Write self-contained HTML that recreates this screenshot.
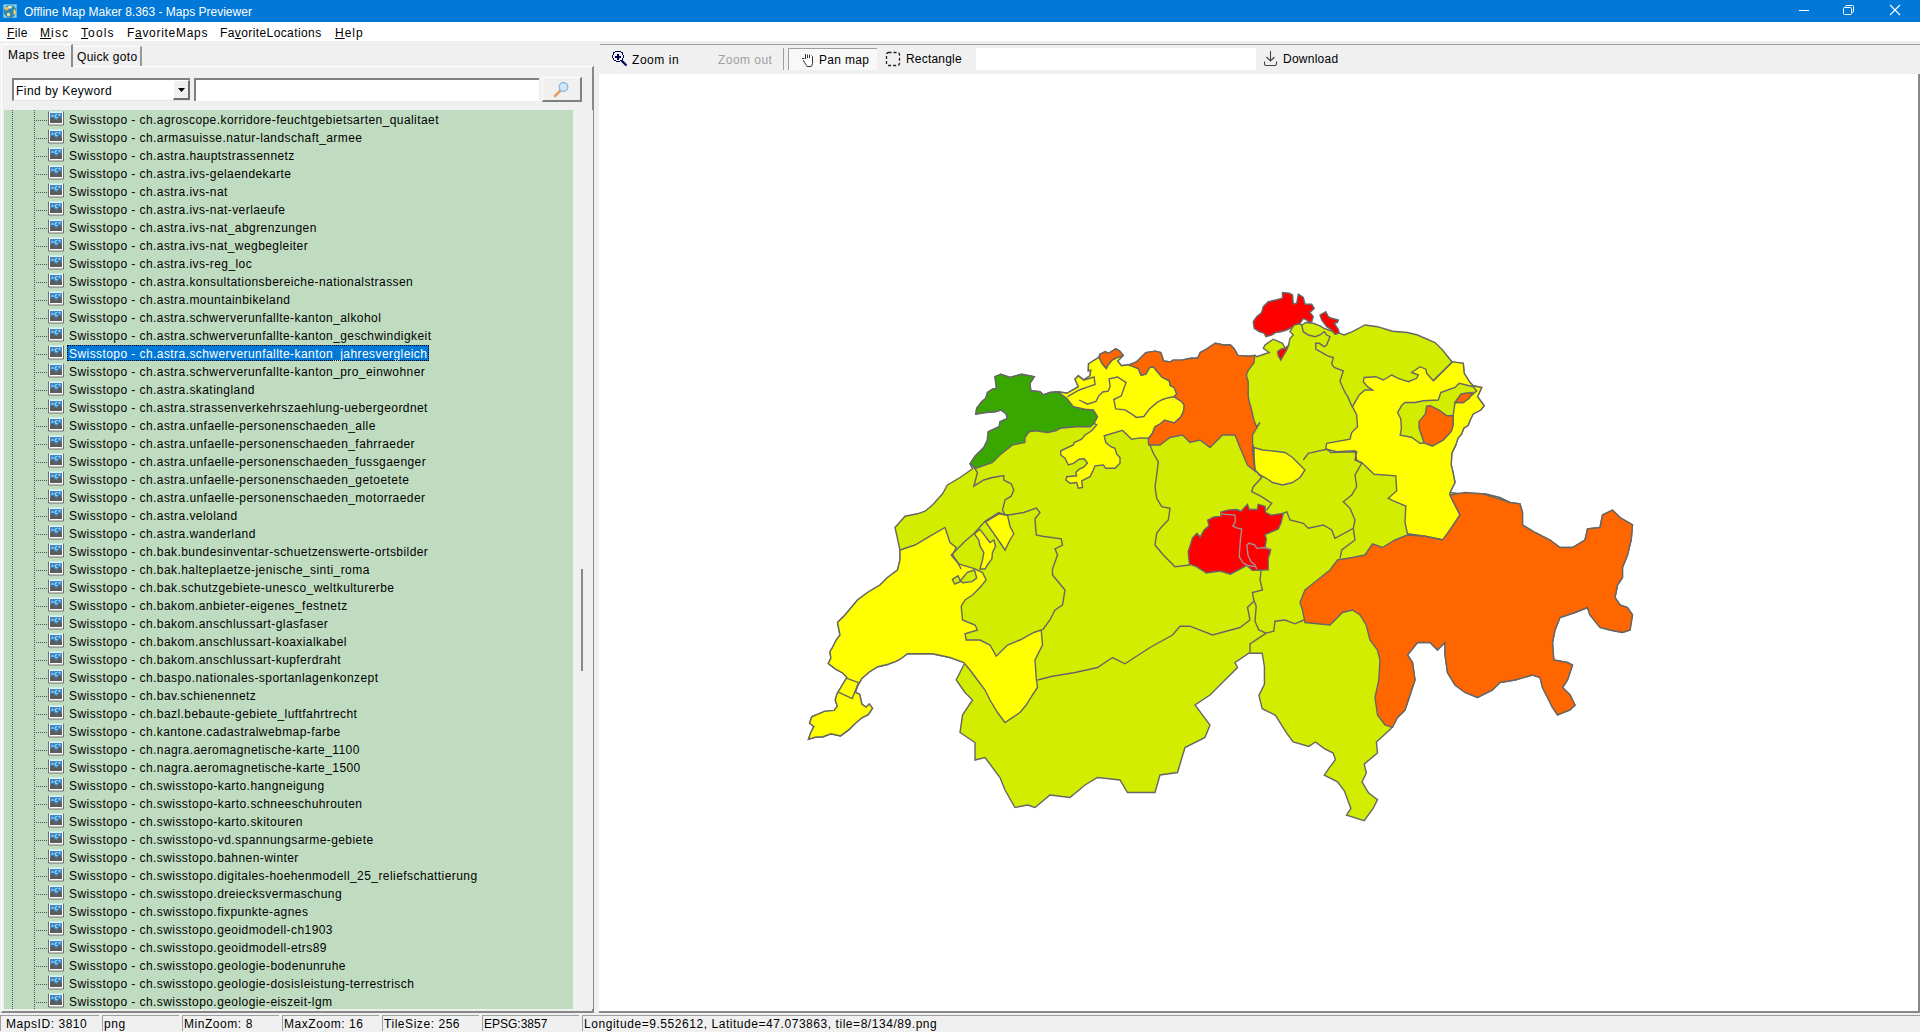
<!DOCTYPE html>
<html><head><meta charset="utf-8"><style>
*{margin:0;padding:0;box-sizing:border-box}
body{width:1920px;height:1032px;overflow:hidden;background:#f0f0f0;position:relative;font-family:'Liberation Sans',sans-serif;font-size:12px;color:#000}
.abs{position:absolute}
.title{position:absolute;left:0;top:0;width:1920px;height:22px;background:#0078d7}
.menu{position:absolute;left:0;top:22px;width:1920px;height:19px;background:#fff}
.menu>span{position:absolute;top:4px;line-height:15px;letter-spacing:0.4px}
.u{text-decoration:underline;text-underline-offset:1px}
.row{position:absolute;left:0;width:573px;height:18px;white-space:pre;letter-spacing:0.43px;}
.hdot{position:absolute;left:36px;top:9px;width:12px;height:1px;background-image:linear-gradient(to right,#555 1px,transparent 1px);background-size:2px 1px}
.sb{position:absolute;top:1015px;height:16px;border-top:1px solid #a0a0a0;border-left:1px solid #a0a0a0;line-height:16px;padding-left:1px;white-space:pre;letter-spacing:0.55px}
</style></head><body>
<div class="title">
 <svg class="abs" style="left:3px;top:4px" width="14" height="14" viewBox="0 0 14 14"><rect width="14" height="14" fill="#86d2ee"/><circle cx="7" cy="7.2" r="6.3" fill="#2f86a8"/><ellipse cx="3.6" cy="4.6" rx="2.2" ry="1.8" fill="#f0b868"/><ellipse cx="7" cy="3" rx="2.2" ry="1.6" fill="#d8eedd"/><path d="M11 5 Q13.5 6.5 12.8 9.5 Q11.5 12 10.5 10 Q10 7 11 5Z" fill="#f2d26a"/><ellipse cx="5.5" cy="10.5" rx="1.6" ry="2" fill="#e2e29a"/><path d="M0 0 H14 V14 H0Z" fill="none" stroke="#1a64c8" stroke-width="0.6"/></svg>
 <span class="abs" style="left:24px;top:5px;color:#fff;line-height:14px;font-size:12px">Offline Map Maker 8.363 - Maps Previewer</span>
 <div class="abs" style="left:1799px;top:10px;width:10px;height:1px;background:#fff"></div>
 <svg class="abs" style="left:1843px;top:5px" width="12" height="11" viewBox="0 0 12 11"><rect x="0.5" y="2.5" width="8" height="7" rx="1" fill="none" stroke="#fff"/><path d="M2.5 2.5 V1.5 Q2.5 0.5 3.5 0.5 H9.5 Q10.5 0.5 10.5 1.5 V6.5 Q10.5 7.5 9.5 7.5 H8.5" fill="none" stroke="#fff"/></svg>
 <svg class="abs" style="left:1889px;top:4px" width="12" height="12" viewBox="0 0 12 12"><path d="M1 1 L11 11 M11 1 L1 11" stroke="#fff" stroke-width="1.1"/></svg>
</div>
<div class="menu">
 <span style="left:7px"><span class="u">F</span>ile</span>
 <span style="left:40px;letter-spacing:1.1px"><span class="u">M</span>isc</span>
 <span style="left:81px;letter-spacing:1.1px"><span class="u">T</span>ools</span>
 <span style="left:127px;letter-spacing:0.7px">F<span class="u">a</span>voriteMaps</span>
 <span style="left:220px">Fa<span class="u">v</span>oriteLocations</span>
 <span style="left:335px;letter-spacing:1px"><span class="u">H</span>elp</span>
</div>
<!-- left panel -->
<div class="abs" style="left:1px;top:44px;width:72px;height:23px;background:#f0f0f0;border-top:1px solid #fff;border-left:1px solid #fff;border-right:2px solid #8a8a8a"></div>
<span class="abs" style="left:8px;top:48px;line-height:15px;letter-spacing:0.45px">Maps tree</span>
<div class="abs" style="left:73px;top:46px;width:69px;height:20px;border-top:1px solid #fff;border-right:2px solid #999"></div>
<span class="abs" style="left:77px;top:50px;line-height:15px;letter-spacing:0.3px">Quick goto</span>
<div class="abs" style="left:1px;top:66px;width:593px;height:947px;border-left:1px solid #fff;border-right:2px solid #888;border-bottom:2px solid #888"></div><div class="abs" style="left:73px;top:66px;width:520px;height:1px;background:#fff"></div>
<!-- combobox -->
<div class="abs" style="left:12px;top:78px;width:178px;height:23px;background:#fff;border-top:2px solid #808080;border-left:2px solid #808080;border-bottom:1px solid #e3e3e3"></div>
<span class="abs" style="left:16px;top:84px;line-height:15px;letter-spacing:0.45px">Find by Keyword</span>
<div class="abs" style="left:173px;top:80px;width:17px;height:20px;background:#f0f0f0;border-right:2px solid #6e6e6e;border-bottom:2px solid #6e6e6e;border-top:1px solid #fff;border-left:1px solid #fff"></div>
<svg class="abs" style="left:178px;top:88px" width="7" height="4"><path d="M0 0 H7 L3.5 4 Z" fill="#000"/></svg>
<div class="abs" style="left:194px;top:78px;width:345px;height:23px;background:#fff;border-top:2px solid #808080;border-left:2px solid #808080"></div>
<div class="abs" style="left:542px;top:77px;width:40px;height:25px;background:#f0f0f0;border-top:1px solid #fff;border-left:1px solid #fff;border-right:2px solid #808080;border-bottom:2px solid #808080"></div>
<svg class="abs" style="left:553px;top:81px" width="17" height="17" viewBox="0 0 17 17"><path d="M2 15 L7 10" stroke="#e0a060" stroke-width="2.6" stroke-linecap="round"/><circle cx="10.5" cy="6" r="4.3" fill="#cde8f8" stroke="#8ab0d8" stroke-width="1.2"/></svg>
<!-- tree -->
<div class="abs" style="left:4px;top:110px;width:569px;height:899px;background:#c0dcc0;overflow:hidden">
 <div class="abs" style="left:8px;top:0;width:1px;height:899px;background-image:linear-gradient(#555 1px,transparent 1px);background-size:1px 2px"></div>
 <div class="abs" style="left:30px;top:0;width:1px;height:899px;background-image:linear-gradient(#555 1px,transparent 1px);background-size:1px 2px"></div>
</div>
<div class="abs" style="left:0;top:0;width:573px;height:1009px;overflow:hidden">
<div class="row" style="top:111px"><svg width="16" height="15" viewBox="0 0 16 15" style="position:absolute;left:48px;top:0px"><rect x="0.5" y="0.5" width="15" height="13.5" fill="#fff"/><path d="M0.5 0.5 V14 H15.5 V0.5" fill="none" stroke="#6e6e6e" stroke-width="1"/><path d="M1 1 H15" stroke="#bfe6ee" stroke-width="1"/><rect x="2" y="2" width="12" height="10" fill="#3f88c8"/><path d="M2 12 V8 L4.5 5.8 L8.5 9.5 L11.5 5.8 L14 8 V12 Z" fill="#5c5c5c"/><circle cx="4.5" cy="5" r="1" fill="#9ad4ff"/><path d="M9 3.6 A1.6 1.6 0 1 0 9.4 6.6" stroke="#a8ecff" stroke-width="1" fill="none"/><path d="M11.5 2.6 v2.4 M10.3 3.8 h2.4" stroke="#9ad4ff" stroke-width="0.8"/></svg><div class="hdot"></div><span style="position:absolute;left:69px;top:0px;line-height:18px;">Swisstopo - ch.agroscope.korridore-feuchtgebietsarten_qualitaet</span></div><div class="row" style="top:129px"><svg width="16" height="15" viewBox="0 0 16 15" style="position:absolute;left:48px;top:0px"><rect x="0.5" y="0.5" width="15" height="13.5" fill="#fff"/><path d="M0.5 0.5 V14 H15.5 V0.5" fill="none" stroke="#6e6e6e" stroke-width="1"/><path d="M1 1 H15" stroke="#bfe6ee" stroke-width="1"/><rect x="2" y="2" width="12" height="10" fill="#3f88c8"/><path d="M2 12 V8 L4.5 5.8 L8.5 9.5 L11.5 5.8 L14 8 V12 Z" fill="#5c5c5c"/><circle cx="4.5" cy="5" r="1" fill="#9ad4ff"/><path d="M9 3.6 A1.6 1.6 0 1 0 9.4 6.6" stroke="#a8ecff" stroke-width="1" fill="none"/><path d="M11.5 2.6 v2.4 M10.3 3.8 h2.4" stroke="#9ad4ff" stroke-width="0.8"/></svg><div class="hdot"></div><span style="position:absolute;left:69px;top:0px;line-height:18px;">Swisstopo - ch.armasuisse.natur-landschaft_armee</span></div><div class="row" style="top:147px"><svg width="16" height="15" viewBox="0 0 16 15" style="position:absolute;left:48px;top:0px"><rect x="0.5" y="0.5" width="15" height="13.5" fill="#fff"/><path d="M0.5 0.5 V14 H15.5 V0.5" fill="none" stroke="#6e6e6e" stroke-width="1"/><path d="M1 1 H15" stroke="#bfe6ee" stroke-width="1"/><rect x="2" y="2" width="12" height="10" fill="#3f88c8"/><path d="M2 12 V8 L4.5 5.8 L8.5 9.5 L11.5 5.8 L14 8 V12 Z" fill="#5c5c5c"/><circle cx="4.5" cy="5" r="1" fill="#9ad4ff"/><path d="M9 3.6 A1.6 1.6 0 1 0 9.4 6.6" stroke="#a8ecff" stroke-width="1" fill="none"/><path d="M11.5 2.6 v2.4 M10.3 3.8 h2.4" stroke="#9ad4ff" stroke-width="0.8"/></svg><div class="hdot"></div><span style="position:absolute;left:69px;top:0px;line-height:18px;">Swisstopo - ch.astra.hauptstrassennetz</span></div><div class="row" style="top:165px"><svg width="16" height="15" viewBox="0 0 16 15" style="position:absolute;left:48px;top:0px"><rect x="0.5" y="0.5" width="15" height="13.5" fill="#fff"/><path d="M0.5 0.5 V14 H15.5 V0.5" fill="none" stroke="#6e6e6e" stroke-width="1"/><path d="M1 1 H15" stroke="#bfe6ee" stroke-width="1"/><rect x="2" y="2" width="12" height="10" fill="#3f88c8"/><path d="M2 12 V8 L4.5 5.8 L8.5 9.5 L11.5 5.8 L14 8 V12 Z" fill="#5c5c5c"/><circle cx="4.5" cy="5" r="1" fill="#9ad4ff"/><path d="M9 3.6 A1.6 1.6 0 1 0 9.4 6.6" stroke="#a8ecff" stroke-width="1" fill="none"/><path d="M11.5 2.6 v2.4 M10.3 3.8 h2.4" stroke="#9ad4ff" stroke-width="0.8"/></svg><div class="hdot"></div><span style="position:absolute;left:69px;top:0px;line-height:18px;">Swisstopo - ch.astra.ivs-gelaendekarte</span></div><div class="row" style="top:183px"><svg width="16" height="15" viewBox="0 0 16 15" style="position:absolute;left:48px;top:0px"><rect x="0.5" y="0.5" width="15" height="13.5" fill="#fff"/><path d="M0.5 0.5 V14 H15.5 V0.5" fill="none" stroke="#6e6e6e" stroke-width="1"/><path d="M1 1 H15" stroke="#bfe6ee" stroke-width="1"/><rect x="2" y="2" width="12" height="10" fill="#3f88c8"/><path d="M2 12 V8 L4.5 5.8 L8.5 9.5 L11.5 5.8 L14 8 V12 Z" fill="#5c5c5c"/><circle cx="4.5" cy="5" r="1" fill="#9ad4ff"/><path d="M9 3.6 A1.6 1.6 0 1 0 9.4 6.6" stroke="#a8ecff" stroke-width="1" fill="none"/><path d="M11.5 2.6 v2.4 M10.3 3.8 h2.4" stroke="#9ad4ff" stroke-width="0.8"/></svg><div class="hdot"></div><span style="position:absolute;left:69px;top:0px;line-height:18px;">Swisstopo - ch.astra.ivs-nat</span></div><div class="row" style="top:201px"><svg width="16" height="15" viewBox="0 0 16 15" style="position:absolute;left:48px;top:0px"><rect x="0.5" y="0.5" width="15" height="13.5" fill="#fff"/><path d="M0.5 0.5 V14 H15.5 V0.5" fill="none" stroke="#6e6e6e" stroke-width="1"/><path d="M1 1 H15" stroke="#bfe6ee" stroke-width="1"/><rect x="2" y="2" width="12" height="10" fill="#3f88c8"/><path d="M2 12 V8 L4.5 5.8 L8.5 9.5 L11.5 5.8 L14 8 V12 Z" fill="#5c5c5c"/><circle cx="4.5" cy="5" r="1" fill="#9ad4ff"/><path d="M9 3.6 A1.6 1.6 0 1 0 9.4 6.6" stroke="#a8ecff" stroke-width="1" fill="none"/><path d="M11.5 2.6 v2.4 M10.3 3.8 h2.4" stroke="#9ad4ff" stroke-width="0.8"/></svg><div class="hdot"></div><span style="position:absolute;left:69px;top:0px;line-height:18px;">Swisstopo - ch.astra.ivs-nat-verlaeufe</span></div><div class="row" style="top:219px"><svg width="16" height="15" viewBox="0 0 16 15" style="position:absolute;left:48px;top:0px"><rect x="0.5" y="0.5" width="15" height="13.5" fill="#fff"/><path d="M0.5 0.5 V14 H15.5 V0.5" fill="none" stroke="#6e6e6e" stroke-width="1"/><path d="M1 1 H15" stroke="#bfe6ee" stroke-width="1"/><rect x="2" y="2" width="12" height="10" fill="#3f88c8"/><path d="M2 12 V8 L4.5 5.8 L8.5 9.5 L11.5 5.8 L14 8 V12 Z" fill="#5c5c5c"/><circle cx="4.5" cy="5" r="1" fill="#9ad4ff"/><path d="M9 3.6 A1.6 1.6 0 1 0 9.4 6.6" stroke="#a8ecff" stroke-width="1" fill="none"/><path d="M11.5 2.6 v2.4 M10.3 3.8 h2.4" stroke="#9ad4ff" stroke-width="0.8"/></svg><div class="hdot"></div><span style="position:absolute;left:69px;top:0px;line-height:18px;">Swisstopo - ch.astra.ivs-nat_abgrenzungen</span></div><div class="row" style="top:237px"><svg width="16" height="15" viewBox="0 0 16 15" style="position:absolute;left:48px;top:0px"><rect x="0.5" y="0.5" width="15" height="13.5" fill="#fff"/><path d="M0.5 0.5 V14 H15.5 V0.5" fill="none" stroke="#6e6e6e" stroke-width="1"/><path d="M1 1 H15" stroke="#bfe6ee" stroke-width="1"/><rect x="2" y="2" width="12" height="10" fill="#3f88c8"/><path d="M2 12 V8 L4.5 5.8 L8.5 9.5 L11.5 5.8 L14 8 V12 Z" fill="#5c5c5c"/><circle cx="4.5" cy="5" r="1" fill="#9ad4ff"/><path d="M9 3.6 A1.6 1.6 0 1 0 9.4 6.6" stroke="#a8ecff" stroke-width="1" fill="none"/><path d="M11.5 2.6 v2.4 M10.3 3.8 h2.4" stroke="#9ad4ff" stroke-width="0.8"/></svg><div class="hdot"></div><span style="position:absolute;left:69px;top:0px;line-height:18px;">Swisstopo - ch.astra.ivs-nat_wegbegleiter</span></div><div class="row" style="top:255px"><svg width="16" height="15" viewBox="0 0 16 15" style="position:absolute;left:48px;top:0px"><rect x="0.5" y="0.5" width="15" height="13.5" fill="#fff"/><path d="M0.5 0.5 V14 H15.5 V0.5" fill="none" stroke="#6e6e6e" stroke-width="1"/><path d="M1 1 H15" stroke="#bfe6ee" stroke-width="1"/><rect x="2" y="2" width="12" height="10" fill="#3f88c8"/><path d="M2 12 V8 L4.5 5.8 L8.5 9.5 L11.5 5.8 L14 8 V12 Z" fill="#5c5c5c"/><circle cx="4.5" cy="5" r="1" fill="#9ad4ff"/><path d="M9 3.6 A1.6 1.6 0 1 0 9.4 6.6" stroke="#a8ecff" stroke-width="1" fill="none"/><path d="M11.5 2.6 v2.4 M10.3 3.8 h2.4" stroke="#9ad4ff" stroke-width="0.8"/></svg><div class="hdot"></div><span style="position:absolute;left:69px;top:0px;line-height:18px;">Swisstopo - ch.astra.ivs-reg_loc</span></div><div class="row" style="top:273px"><svg width="16" height="15" viewBox="0 0 16 15" style="position:absolute;left:48px;top:0px"><rect x="0.5" y="0.5" width="15" height="13.5" fill="#fff"/><path d="M0.5 0.5 V14 H15.5 V0.5" fill="none" stroke="#6e6e6e" stroke-width="1"/><path d="M1 1 H15" stroke="#bfe6ee" stroke-width="1"/><rect x="2" y="2" width="12" height="10" fill="#3f88c8"/><path d="M2 12 V8 L4.5 5.8 L8.5 9.5 L11.5 5.8 L14 8 V12 Z" fill="#5c5c5c"/><circle cx="4.5" cy="5" r="1" fill="#9ad4ff"/><path d="M9 3.6 A1.6 1.6 0 1 0 9.4 6.6" stroke="#a8ecff" stroke-width="1" fill="none"/><path d="M11.5 2.6 v2.4 M10.3 3.8 h2.4" stroke="#9ad4ff" stroke-width="0.8"/></svg><div class="hdot"></div><span style="position:absolute;left:69px;top:0px;line-height:18px;">Swisstopo - ch.astra.konsultationsbereiche-nationalstrassen</span></div><div class="row" style="top:291px"><svg width="16" height="15" viewBox="0 0 16 15" style="position:absolute;left:48px;top:0px"><rect x="0.5" y="0.5" width="15" height="13.5" fill="#fff"/><path d="M0.5 0.5 V14 H15.5 V0.5" fill="none" stroke="#6e6e6e" stroke-width="1"/><path d="M1 1 H15" stroke="#bfe6ee" stroke-width="1"/><rect x="2" y="2" width="12" height="10" fill="#3f88c8"/><path d="M2 12 V8 L4.5 5.8 L8.5 9.5 L11.5 5.8 L14 8 V12 Z" fill="#5c5c5c"/><circle cx="4.5" cy="5" r="1" fill="#9ad4ff"/><path d="M9 3.6 A1.6 1.6 0 1 0 9.4 6.6" stroke="#a8ecff" stroke-width="1" fill="none"/><path d="M11.5 2.6 v2.4 M10.3 3.8 h2.4" stroke="#9ad4ff" stroke-width="0.8"/></svg><div class="hdot"></div><span style="position:absolute;left:69px;top:0px;line-height:18px;">Swisstopo - ch.astra.mountainbikeland</span></div><div class="row" style="top:309px"><svg width="16" height="15" viewBox="0 0 16 15" style="position:absolute;left:48px;top:0px"><rect x="0.5" y="0.5" width="15" height="13.5" fill="#fff"/><path d="M0.5 0.5 V14 H15.5 V0.5" fill="none" stroke="#6e6e6e" stroke-width="1"/><path d="M1 1 H15" stroke="#bfe6ee" stroke-width="1"/><rect x="2" y="2" width="12" height="10" fill="#3f88c8"/><path d="M2 12 V8 L4.5 5.8 L8.5 9.5 L11.5 5.8 L14 8 V12 Z" fill="#5c5c5c"/><circle cx="4.5" cy="5" r="1" fill="#9ad4ff"/><path d="M9 3.6 A1.6 1.6 0 1 0 9.4 6.6" stroke="#a8ecff" stroke-width="1" fill="none"/><path d="M11.5 2.6 v2.4 M10.3 3.8 h2.4" stroke="#9ad4ff" stroke-width="0.8"/></svg><div class="hdot"></div><span style="position:absolute;left:69px;top:0px;line-height:18px;">Swisstopo - ch.astra.schwerverunfallte-kanton_alkohol</span></div><div class="row" style="top:327px"><svg width="16" height="15" viewBox="0 0 16 15" style="position:absolute;left:48px;top:0px"><rect x="0.5" y="0.5" width="15" height="13.5" fill="#fff"/><path d="M0.5 0.5 V14 H15.5 V0.5" fill="none" stroke="#6e6e6e" stroke-width="1"/><path d="M1 1 H15" stroke="#bfe6ee" stroke-width="1"/><rect x="2" y="2" width="12" height="10" fill="#3f88c8"/><path d="M2 12 V8 L4.5 5.8 L8.5 9.5 L11.5 5.8 L14 8 V12 Z" fill="#5c5c5c"/><circle cx="4.5" cy="5" r="1" fill="#9ad4ff"/><path d="M9 3.6 A1.6 1.6 0 1 0 9.4 6.6" stroke="#a8ecff" stroke-width="1" fill="none"/><path d="M11.5 2.6 v2.4 M10.3 3.8 h2.4" stroke="#9ad4ff" stroke-width="0.8"/></svg><div class="hdot"></div><span style="position:absolute;left:69px;top:0px;line-height:18px;">Swisstopo - ch.astra.schwerverunfallte-kanton_geschwindigkeit</span></div><div class="row" style="top:345px"><svg width="16" height="15" viewBox="0 0 16 15" style="position:absolute;left:48px;top:0px"><rect x="0.5" y="0.5" width="15" height="13.5" fill="#fff"/><path d="M0.5 0.5 V14 H15.5 V0.5" fill="none" stroke="#6e6e6e" stroke-width="1"/><path d="M1 1 H15" stroke="#bfe6ee" stroke-width="1"/><rect x="2" y="2" width="12" height="10" fill="#3f88c8"/><path d="M2 12 V8 L4.5 5.8 L8.5 9.5 L11.5 5.8 L14 8 V12 Z" fill="#5c5c5c"/><circle cx="4.5" cy="5" r="1" fill="#9ad4ff"/><path d="M9 3.6 A1.6 1.6 0 1 0 9.4 6.6" stroke="#a8ecff" stroke-width="1" fill="none"/><path d="M11.5 2.6 v2.4 M10.3 3.8 h2.4" stroke="#9ad4ff" stroke-width="0.8"/></svg><div class="hdot"></div><span style="position:absolute;left:67px;top:0px;height:16px;padding:0 2px;background:#0078d7;color:#fff;outline:1px dotted #000;outline-offset:-1px;line-height:18px;">Swisstopo - ch.astra.schwerverunfallte-kanton_jahresvergleich</span></div><div class="row" style="top:363px"><svg width="16" height="15" viewBox="0 0 16 15" style="position:absolute;left:48px;top:0px"><rect x="0.5" y="0.5" width="15" height="13.5" fill="#fff"/><path d="M0.5 0.5 V14 H15.5 V0.5" fill="none" stroke="#6e6e6e" stroke-width="1"/><path d="M1 1 H15" stroke="#bfe6ee" stroke-width="1"/><rect x="2" y="2" width="12" height="10" fill="#3f88c8"/><path d="M2 12 V8 L4.5 5.8 L8.5 9.5 L11.5 5.8 L14 8 V12 Z" fill="#5c5c5c"/><circle cx="4.5" cy="5" r="1" fill="#9ad4ff"/><path d="M9 3.6 A1.6 1.6 0 1 0 9.4 6.6" stroke="#a8ecff" stroke-width="1" fill="none"/><path d="M11.5 2.6 v2.4 M10.3 3.8 h2.4" stroke="#9ad4ff" stroke-width="0.8"/></svg><div class="hdot"></div><span style="position:absolute;left:69px;top:0px;line-height:18px;">Swisstopo - ch.astra.schwerverunfallte-kanton_pro_einwohner</span></div><div class="row" style="top:381px"><svg width="16" height="15" viewBox="0 0 16 15" style="position:absolute;left:48px;top:0px"><rect x="0.5" y="0.5" width="15" height="13.5" fill="#fff"/><path d="M0.5 0.5 V14 H15.5 V0.5" fill="none" stroke="#6e6e6e" stroke-width="1"/><path d="M1 1 H15" stroke="#bfe6ee" stroke-width="1"/><rect x="2" y="2" width="12" height="10" fill="#3f88c8"/><path d="M2 12 V8 L4.5 5.8 L8.5 9.5 L11.5 5.8 L14 8 V12 Z" fill="#5c5c5c"/><circle cx="4.5" cy="5" r="1" fill="#9ad4ff"/><path d="M9 3.6 A1.6 1.6 0 1 0 9.4 6.6" stroke="#a8ecff" stroke-width="1" fill="none"/><path d="M11.5 2.6 v2.4 M10.3 3.8 h2.4" stroke="#9ad4ff" stroke-width="0.8"/></svg><div class="hdot"></div><span style="position:absolute;left:69px;top:0px;line-height:18px;">Swisstopo - ch.astra.skatingland</span></div><div class="row" style="top:399px"><svg width="16" height="15" viewBox="0 0 16 15" style="position:absolute;left:48px;top:0px"><rect x="0.5" y="0.5" width="15" height="13.5" fill="#fff"/><path d="M0.5 0.5 V14 H15.5 V0.5" fill="none" stroke="#6e6e6e" stroke-width="1"/><path d="M1 1 H15" stroke="#bfe6ee" stroke-width="1"/><rect x="2" y="2" width="12" height="10" fill="#3f88c8"/><path d="M2 12 V8 L4.5 5.8 L8.5 9.5 L11.5 5.8 L14 8 V12 Z" fill="#5c5c5c"/><circle cx="4.5" cy="5" r="1" fill="#9ad4ff"/><path d="M9 3.6 A1.6 1.6 0 1 0 9.4 6.6" stroke="#a8ecff" stroke-width="1" fill="none"/><path d="M11.5 2.6 v2.4 M10.3 3.8 h2.4" stroke="#9ad4ff" stroke-width="0.8"/></svg><div class="hdot"></div><span style="position:absolute;left:69px;top:0px;line-height:18px;">Swisstopo - ch.astra.strassenverkehrszaehlung-uebergeordnet</span></div><div class="row" style="top:417px"><svg width="16" height="15" viewBox="0 0 16 15" style="position:absolute;left:48px;top:0px"><rect x="0.5" y="0.5" width="15" height="13.5" fill="#fff"/><path d="M0.5 0.5 V14 H15.5 V0.5" fill="none" stroke="#6e6e6e" stroke-width="1"/><path d="M1 1 H15" stroke="#bfe6ee" stroke-width="1"/><rect x="2" y="2" width="12" height="10" fill="#3f88c8"/><path d="M2 12 V8 L4.5 5.8 L8.5 9.5 L11.5 5.8 L14 8 V12 Z" fill="#5c5c5c"/><circle cx="4.5" cy="5" r="1" fill="#9ad4ff"/><path d="M9 3.6 A1.6 1.6 0 1 0 9.4 6.6" stroke="#a8ecff" stroke-width="1" fill="none"/><path d="M11.5 2.6 v2.4 M10.3 3.8 h2.4" stroke="#9ad4ff" stroke-width="0.8"/></svg><div class="hdot"></div><span style="position:absolute;left:69px;top:0px;line-height:18px;">Swisstopo - ch.astra.unfaelle-personenschaeden_alle</span></div><div class="row" style="top:435px"><svg width="16" height="15" viewBox="0 0 16 15" style="position:absolute;left:48px;top:0px"><rect x="0.5" y="0.5" width="15" height="13.5" fill="#fff"/><path d="M0.5 0.5 V14 H15.5 V0.5" fill="none" stroke="#6e6e6e" stroke-width="1"/><path d="M1 1 H15" stroke="#bfe6ee" stroke-width="1"/><rect x="2" y="2" width="12" height="10" fill="#3f88c8"/><path d="M2 12 V8 L4.5 5.8 L8.5 9.5 L11.5 5.8 L14 8 V12 Z" fill="#5c5c5c"/><circle cx="4.5" cy="5" r="1" fill="#9ad4ff"/><path d="M9 3.6 A1.6 1.6 0 1 0 9.4 6.6" stroke="#a8ecff" stroke-width="1" fill="none"/><path d="M11.5 2.6 v2.4 M10.3 3.8 h2.4" stroke="#9ad4ff" stroke-width="0.8"/></svg><div class="hdot"></div><span style="position:absolute;left:69px;top:0px;line-height:18px;">Swisstopo - ch.astra.unfaelle-personenschaeden_fahrraeder</span></div><div class="row" style="top:453px"><svg width="16" height="15" viewBox="0 0 16 15" style="position:absolute;left:48px;top:0px"><rect x="0.5" y="0.5" width="15" height="13.5" fill="#fff"/><path d="M0.5 0.5 V14 H15.5 V0.5" fill="none" stroke="#6e6e6e" stroke-width="1"/><path d="M1 1 H15" stroke="#bfe6ee" stroke-width="1"/><rect x="2" y="2" width="12" height="10" fill="#3f88c8"/><path d="M2 12 V8 L4.5 5.8 L8.5 9.5 L11.5 5.8 L14 8 V12 Z" fill="#5c5c5c"/><circle cx="4.5" cy="5" r="1" fill="#9ad4ff"/><path d="M9 3.6 A1.6 1.6 0 1 0 9.4 6.6" stroke="#a8ecff" stroke-width="1" fill="none"/><path d="M11.5 2.6 v2.4 M10.3 3.8 h2.4" stroke="#9ad4ff" stroke-width="0.8"/></svg><div class="hdot"></div><span style="position:absolute;left:69px;top:0px;line-height:18px;">Swisstopo - ch.astra.unfaelle-personenschaeden_fussgaenger</span></div><div class="row" style="top:471px"><svg width="16" height="15" viewBox="0 0 16 15" style="position:absolute;left:48px;top:0px"><rect x="0.5" y="0.5" width="15" height="13.5" fill="#fff"/><path d="M0.5 0.5 V14 H15.5 V0.5" fill="none" stroke="#6e6e6e" stroke-width="1"/><path d="M1 1 H15" stroke="#bfe6ee" stroke-width="1"/><rect x="2" y="2" width="12" height="10" fill="#3f88c8"/><path d="M2 12 V8 L4.5 5.8 L8.5 9.5 L11.5 5.8 L14 8 V12 Z" fill="#5c5c5c"/><circle cx="4.5" cy="5" r="1" fill="#9ad4ff"/><path d="M9 3.6 A1.6 1.6 0 1 0 9.4 6.6" stroke="#a8ecff" stroke-width="1" fill="none"/><path d="M11.5 2.6 v2.4 M10.3 3.8 h2.4" stroke="#9ad4ff" stroke-width="0.8"/></svg><div class="hdot"></div><span style="position:absolute;left:69px;top:0px;line-height:18px;">Swisstopo - ch.astra.unfaelle-personenschaeden_getoetete</span></div><div class="row" style="top:489px"><svg width="16" height="15" viewBox="0 0 16 15" style="position:absolute;left:48px;top:0px"><rect x="0.5" y="0.5" width="15" height="13.5" fill="#fff"/><path d="M0.5 0.5 V14 H15.5 V0.5" fill="none" stroke="#6e6e6e" stroke-width="1"/><path d="M1 1 H15" stroke="#bfe6ee" stroke-width="1"/><rect x="2" y="2" width="12" height="10" fill="#3f88c8"/><path d="M2 12 V8 L4.5 5.8 L8.5 9.5 L11.5 5.8 L14 8 V12 Z" fill="#5c5c5c"/><circle cx="4.5" cy="5" r="1" fill="#9ad4ff"/><path d="M9 3.6 A1.6 1.6 0 1 0 9.4 6.6" stroke="#a8ecff" stroke-width="1" fill="none"/><path d="M11.5 2.6 v2.4 M10.3 3.8 h2.4" stroke="#9ad4ff" stroke-width="0.8"/></svg><div class="hdot"></div><span style="position:absolute;left:69px;top:0px;line-height:18px;">Swisstopo - ch.astra.unfaelle-personenschaeden_motorraeder</span></div><div class="row" style="top:507px"><svg width="16" height="15" viewBox="0 0 16 15" style="position:absolute;left:48px;top:0px"><rect x="0.5" y="0.5" width="15" height="13.5" fill="#fff"/><path d="M0.5 0.5 V14 H15.5 V0.5" fill="none" stroke="#6e6e6e" stroke-width="1"/><path d="M1 1 H15" stroke="#bfe6ee" stroke-width="1"/><rect x="2" y="2" width="12" height="10" fill="#3f88c8"/><path d="M2 12 V8 L4.5 5.8 L8.5 9.5 L11.5 5.8 L14 8 V12 Z" fill="#5c5c5c"/><circle cx="4.5" cy="5" r="1" fill="#9ad4ff"/><path d="M9 3.6 A1.6 1.6 0 1 0 9.4 6.6" stroke="#a8ecff" stroke-width="1" fill="none"/><path d="M11.5 2.6 v2.4 M10.3 3.8 h2.4" stroke="#9ad4ff" stroke-width="0.8"/></svg><div class="hdot"></div><span style="position:absolute;left:69px;top:0px;line-height:18px;">Swisstopo - ch.astra.veloland</span></div><div class="row" style="top:525px"><svg width="16" height="15" viewBox="0 0 16 15" style="position:absolute;left:48px;top:0px"><rect x="0.5" y="0.5" width="15" height="13.5" fill="#fff"/><path d="M0.5 0.5 V14 H15.5 V0.5" fill="none" stroke="#6e6e6e" stroke-width="1"/><path d="M1 1 H15" stroke="#bfe6ee" stroke-width="1"/><rect x="2" y="2" width="12" height="10" fill="#3f88c8"/><path d="M2 12 V8 L4.5 5.8 L8.5 9.5 L11.5 5.8 L14 8 V12 Z" fill="#5c5c5c"/><circle cx="4.5" cy="5" r="1" fill="#9ad4ff"/><path d="M9 3.6 A1.6 1.6 0 1 0 9.4 6.6" stroke="#a8ecff" stroke-width="1" fill="none"/><path d="M11.5 2.6 v2.4 M10.3 3.8 h2.4" stroke="#9ad4ff" stroke-width="0.8"/></svg><div class="hdot"></div><span style="position:absolute;left:69px;top:0px;line-height:18px;">Swisstopo - ch.astra.wanderland</span></div><div class="row" style="top:543px"><svg width="16" height="15" viewBox="0 0 16 15" style="position:absolute;left:48px;top:0px"><rect x="0.5" y="0.5" width="15" height="13.5" fill="#fff"/><path d="M0.5 0.5 V14 H15.5 V0.5" fill="none" stroke="#6e6e6e" stroke-width="1"/><path d="M1 1 H15" stroke="#bfe6ee" stroke-width="1"/><rect x="2" y="2" width="12" height="10" fill="#3f88c8"/><path d="M2 12 V8 L4.5 5.8 L8.5 9.5 L11.5 5.8 L14 8 V12 Z" fill="#5c5c5c"/><circle cx="4.5" cy="5" r="1" fill="#9ad4ff"/><path d="M9 3.6 A1.6 1.6 0 1 0 9.4 6.6" stroke="#a8ecff" stroke-width="1" fill="none"/><path d="M11.5 2.6 v2.4 M10.3 3.8 h2.4" stroke="#9ad4ff" stroke-width="0.8"/></svg><div class="hdot"></div><span style="position:absolute;left:69px;top:0px;line-height:18px;">Swisstopo - ch.bak.bundesinventar-schuetzenswerte-ortsbilder</span></div><div class="row" style="top:561px"><svg width="16" height="15" viewBox="0 0 16 15" style="position:absolute;left:48px;top:0px"><rect x="0.5" y="0.5" width="15" height="13.5" fill="#fff"/><path d="M0.5 0.5 V14 H15.5 V0.5" fill="none" stroke="#6e6e6e" stroke-width="1"/><path d="M1 1 H15" stroke="#bfe6ee" stroke-width="1"/><rect x="2" y="2" width="12" height="10" fill="#3f88c8"/><path d="M2 12 V8 L4.5 5.8 L8.5 9.5 L11.5 5.8 L14 8 V12 Z" fill="#5c5c5c"/><circle cx="4.5" cy="5" r="1" fill="#9ad4ff"/><path d="M9 3.6 A1.6 1.6 0 1 0 9.4 6.6" stroke="#a8ecff" stroke-width="1" fill="none"/><path d="M11.5 2.6 v2.4 M10.3 3.8 h2.4" stroke="#9ad4ff" stroke-width="0.8"/></svg><div class="hdot"></div><span style="position:absolute;left:69px;top:0px;line-height:18px;">Swisstopo - ch.bak.halteplaetze-jenische_sinti_roma</span></div><div class="row" style="top:579px"><svg width="16" height="15" viewBox="0 0 16 15" style="position:absolute;left:48px;top:0px"><rect x="0.5" y="0.5" width="15" height="13.5" fill="#fff"/><path d="M0.5 0.5 V14 H15.5 V0.5" fill="none" stroke="#6e6e6e" stroke-width="1"/><path d="M1 1 H15" stroke="#bfe6ee" stroke-width="1"/><rect x="2" y="2" width="12" height="10" fill="#3f88c8"/><path d="M2 12 V8 L4.5 5.8 L8.5 9.5 L11.5 5.8 L14 8 V12 Z" fill="#5c5c5c"/><circle cx="4.5" cy="5" r="1" fill="#9ad4ff"/><path d="M9 3.6 A1.6 1.6 0 1 0 9.4 6.6" stroke="#a8ecff" stroke-width="1" fill="none"/><path d="M11.5 2.6 v2.4 M10.3 3.8 h2.4" stroke="#9ad4ff" stroke-width="0.8"/></svg><div class="hdot"></div><span style="position:absolute;left:69px;top:0px;line-height:18px;">Swisstopo - ch.bak.schutzgebiete-unesco_weltkulturerbe</span></div><div class="row" style="top:597px"><svg width="16" height="15" viewBox="0 0 16 15" style="position:absolute;left:48px;top:0px"><rect x="0.5" y="0.5" width="15" height="13.5" fill="#fff"/><path d="M0.5 0.5 V14 H15.5 V0.5" fill="none" stroke="#6e6e6e" stroke-width="1"/><path d="M1 1 H15" stroke="#bfe6ee" stroke-width="1"/><rect x="2" y="2" width="12" height="10" fill="#3f88c8"/><path d="M2 12 V8 L4.5 5.8 L8.5 9.5 L11.5 5.8 L14 8 V12 Z" fill="#5c5c5c"/><circle cx="4.5" cy="5" r="1" fill="#9ad4ff"/><path d="M9 3.6 A1.6 1.6 0 1 0 9.4 6.6" stroke="#a8ecff" stroke-width="1" fill="none"/><path d="M11.5 2.6 v2.4 M10.3 3.8 h2.4" stroke="#9ad4ff" stroke-width="0.8"/></svg><div class="hdot"></div><span style="position:absolute;left:69px;top:0px;line-height:18px;">Swisstopo - ch.bakom.anbieter-eigenes_festnetz</span></div><div class="row" style="top:615px"><svg width="16" height="15" viewBox="0 0 16 15" style="position:absolute;left:48px;top:0px"><rect x="0.5" y="0.5" width="15" height="13.5" fill="#fff"/><path d="M0.5 0.5 V14 H15.5 V0.5" fill="none" stroke="#6e6e6e" stroke-width="1"/><path d="M1 1 H15" stroke="#bfe6ee" stroke-width="1"/><rect x="2" y="2" width="12" height="10" fill="#3f88c8"/><path d="M2 12 V8 L4.5 5.8 L8.5 9.5 L11.5 5.8 L14 8 V12 Z" fill="#5c5c5c"/><circle cx="4.5" cy="5" r="1" fill="#9ad4ff"/><path d="M9 3.6 A1.6 1.6 0 1 0 9.4 6.6" stroke="#a8ecff" stroke-width="1" fill="none"/><path d="M11.5 2.6 v2.4 M10.3 3.8 h2.4" stroke="#9ad4ff" stroke-width="0.8"/></svg><div class="hdot"></div><span style="position:absolute;left:69px;top:0px;line-height:18px;">Swisstopo - ch.bakom.anschlussart-glasfaser</span></div><div class="row" style="top:633px"><svg width="16" height="15" viewBox="0 0 16 15" style="position:absolute;left:48px;top:0px"><rect x="0.5" y="0.5" width="15" height="13.5" fill="#fff"/><path d="M0.5 0.5 V14 H15.5 V0.5" fill="none" stroke="#6e6e6e" stroke-width="1"/><path d="M1 1 H15" stroke="#bfe6ee" stroke-width="1"/><rect x="2" y="2" width="12" height="10" fill="#3f88c8"/><path d="M2 12 V8 L4.5 5.8 L8.5 9.5 L11.5 5.8 L14 8 V12 Z" fill="#5c5c5c"/><circle cx="4.5" cy="5" r="1" fill="#9ad4ff"/><path d="M9 3.6 A1.6 1.6 0 1 0 9.4 6.6" stroke="#a8ecff" stroke-width="1" fill="none"/><path d="M11.5 2.6 v2.4 M10.3 3.8 h2.4" stroke="#9ad4ff" stroke-width="0.8"/></svg><div class="hdot"></div><span style="position:absolute;left:69px;top:0px;line-height:18px;">Swisstopo - ch.bakom.anschlussart-koaxialkabel</span></div><div class="row" style="top:651px"><svg width="16" height="15" viewBox="0 0 16 15" style="position:absolute;left:48px;top:0px"><rect x="0.5" y="0.5" width="15" height="13.5" fill="#fff"/><path d="M0.5 0.5 V14 H15.5 V0.5" fill="none" stroke="#6e6e6e" stroke-width="1"/><path d="M1 1 H15" stroke="#bfe6ee" stroke-width="1"/><rect x="2" y="2" width="12" height="10" fill="#3f88c8"/><path d="M2 12 V8 L4.5 5.8 L8.5 9.5 L11.5 5.8 L14 8 V12 Z" fill="#5c5c5c"/><circle cx="4.5" cy="5" r="1" fill="#9ad4ff"/><path d="M9 3.6 A1.6 1.6 0 1 0 9.4 6.6" stroke="#a8ecff" stroke-width="1" fill="none"/><path d="M11.5 2.6 v2.4 M10.3 3.8 h2.4" stroke="#9ad4ff" stroke-width="0.8"/></svg><div class="hdot"></div><span style="position:absolute;left:69px;top:0px;line-height:18px;">Swisstopo - ch.bakom.anschlussart-kupferdraht</span></div><div class="row" style="top:669px"><svg width="16" height="15" viewBox="0 0 16 15" style="position:absolute;left:48px;top:0px"><rect x="0.5" y="0.5" width="15" height="13.5" fill="#fff"/><path d="M0.5 0.5 V14 H15.5 V0.5" fill="none" stroke="#6e6e6e" stroke-width="1"/><path d="M1 1 H15" stroke="#bfe6ee" stroke-width="1"/><rect x="2" y="2" width="12" height="10" fill="#3f88c8"/><path d="M2 12 V8 L4.5 5.8 L8.5 9.5 L11.5 5.8 L14 8 V12 Z" fill="#5c5c5c"/><circle cx="4.5" cy="5" r="1" fill="#9ad4ff"/><path d="M9 3.6 A1.6 1.6 0 1 0 9.4 6.6" stroke="#a8ecff" stroke-width="1" fill="none"/><path d="M11.5 2.6 v2.4 M10.3 3.8 h2.4" stroke="#9ad4ff" stroke-width="0.8"/></svg><div class="hdot"></div><span style="position:absolute;left:69px;top:0px;line-height:18px;">Swisstopo - ch.baspo.nationales-sportanlagenkonzept</span></div><div class="row" style="top:687px"><svg width="16" height="15" viewBox="0 0 16 15" style="position:absolute;left:48px;top:0px"><rect x="0.5" y="0.5" width="15" height="13.5" fill="#fff"/><path d="M0.5 0.5 V14 H15.5 V0.5" fill="none" stroke="#6e6e6e" stroke-width="1"/><path d="M1 1 H15" stroke="#bfe6ee" stroke-width="1"/><rect x="2" y="2" width="12" height="10" fill="#3f88c8"/><path d="M2 12 V8 L4.5 5.8 L8.5 9.5 L11.5 5.8 L14 8 V12 Z" fill="#5c5c5c"/><circle cx="4.5" cy="5" r="1" fill="#9ad4ff"/><path d="M9 3.6 A1.6 1.6 0 1 0 9.4 6.6" stroke="#a8ecff" stroke-width="1" fill="none"/><path d="M11.5 2.6 v2.4 M10.3 3.8 h2.4" stroke="#9ad4ff" stroke-width="0.8"/></svg><div class="hdot"></div><span style="position:absolute;left:69px;top:0px;line-height:18px;">Swisstopo - ch.bav.schienennetz</span></div><div class="row" style="top:705px"><svg width="16" height="15" viewBox="0 0 16 15" style="position:absolute;left:48px;top:0px"><rect x="0.5" y="0.5" width="15" height="13.5" fill="#fff"/><path d="M0.5 0.5 V14 H15.5 V0.5" fill="none" stroke="#6e6e6e" stroke-width="1"/><path d="M1 1 H15" stroke="#bfe6ee" stroke-width="1"/><rect x="2" y="2" width="12" height="10" fill="#3f88c8"/><path d="M2 12 V8 L4.5 5.8 L8.5 9.5 L11.5 5.8 L14 8 V12 Z" fill="#5c5c5c"/><circle cx="4.5" cy="5" r="1" fill="#9ad4ff"/><path d="M9 3.6 A1.6 1.6 0 1 0 9.4 6.6" stroke="#a8ecff" stroke-width="1" fill="none"/><path d="M11.5 2.6 v2.4 M10.3 3.8 h2.4" stroke="#9ad4ff" stroke-width="0.8"/></svg><div class="hdot"></div><span style="position:absolute;left:69px;top:0px;line-height:18px;">Swisstopo - ch.bazl.bebaute-gebiete_luftfahrtrecht</span></div><div class="row" style="top:723px"><svg width="16" height="15" viewBox="0 0 16 15" style="position:absolute;left:48px;top:0px"><rect x="0.5" y="0.5" width="15" height="13.5" fill="#fff"/><path d="M0.5 0.5 V14 H15.5 V0.5" fill="none" stroke="#6e6e6e" stroke-width="1"/><path d="M1 1 H15" stroke="#bfe6ee" stroke-width="1"/><rect x="2" y="2" width="12" height="10" fill="#3f88c8"/><path d="M2 12 V8 L4.5 5.8 L8.5 9.5 L11.5 5.8 L14 8 V12 Z" fill="#5c5c5c"/><circle cx="4.5" cy="5" r="1" fill="#9ad4ff"/><path d="M9 3.6 A1.6 1.6 0 1 0 9.4 6.6" stroke="#a8ecff" stroke-width="1" fill="none"/><path d="M11.5 2.6 v2.4 M10.3 3.8 h2.4" stroke="#9ad4ff" stroke-width="0.8"/></svg><div class="hdot"></div><span style="position:absolute;left:69px;top:0px;line-height:18px;">Swisstopo - ch.kantone.cadastralwebmap-farbe</span></div><div class="row" style="top:741px"><svg width="16" height="15" viewBox="0 0 16 15" style="position:absolute;left:48px;top:0px"><rect x="0.5" y="0.5" width="15" height="13.5" fill="#fff"/><path d="M0.5 0.5 V14 H15.5 V0.5" fill="none" stroke="#6e6e6e" stroke-width="1"/><path d="M1 1 H15" stroke="#bfe6ee" stroke-width="1"/><rect x="2" y="2" width="12" height="10" fill="#3f88c8"/><path d="M2 12 V8 L4.5 5.8 L8.5 9.5 L11.5 5.8 L14 8 V12 Z" fill="#5c5c5c"/><circle cx="4.5" cy="5" r="1" fill="#9ad4ff"/><path d="M9 3.6 A1.6 1.6 0 1 0 9.4 6.6" stroke="#a8ecff" stroke-width="1" fill="none"/><path d="M11.5 2.6 v2.4 M10.3 3.8 h2.4" stroke="#9ad4ff" stroke-width="0.8"/></svg><div class="hdot"></div><span style="position:absolute;left:69px;top:0px;line-height:18px;">Swisstopo - ch.nagra.aeromagnetische-karte_1100</span></div><div class="row" style="top:759px"><svg width="16" height="15" viewBox="0 0 16 15" style="position:absolute;left:48px;top:0px"><rect x="0.5" y="0.5" width="15" height="13.5" fill="#fff"/><path d="M0.5 0.5 V14 H15.5 V0.5" fill="none" stroke="#6e6e6e" stroke-width="1"/><path d="M1 1 H15" stroke="#bfe6ee" stroke-width="1"/><rect x="2" y="2" width="12" height="10" fill="#3f88c8"/><path d="M2 12 V8 L4.5 5.8 L8.5 9.5 L11.5 5.8 L14 8 V12 Z" fill="#5c5c5c"/><circle cx="4.5" cy="5" r="1" fill="#9ad4ff"/><path d="M9 3.6 A1.6 1.6 0 1 0 9.4 6.6" stroke="#a8ecff" stroke-width="1" fill="none"/><path d="M11.5 2.6 v2.4 M10.3 3.8 h2.4" stroke="#9ad4ff" stroke-width="0.8"/></svg><div class="hdot"></div><span style="position:absolute;left:69px;top:0px;line-height:18px;">Swisstopo - ch.nagra.aeromagnetische-karte_1500</span></div><div class="row" style="top:777px"><svg width="16" height="15" viewBox="0 0 16 15" style="position:absolute;left:48px;top:0px"><rect x="0.5" y="0.5" width="15" height="13.5" fill="#fff"/><path d="M0.5 0.5 V14 H15.5 V0.5" fill="none" stroke="#6e6e6e" stroke-width="1"/><path d="M1 1 H15" stroke="#bfe6ee" stroke-width="1"/><rect x="2" y="2" width="12" height="10" fill="#3f88c8"/><path d="M2 12 V8 L4.5 5.8 L8.5 9.5 L11.5 5.8 L14 8 V12 Z" fill="#5c5c5c"/><circle cx="4.5" cy="5" r="1" fill="#9ad4ff"/><path d="M9 3.6 A1.6 1.6 0 1 0 9.4 6.6" stroke="#a8ecff" stroke-width="1" fill="none"/><path d="M11.5 2.6 v2.4 M10.3 3.8 h2.4" stroke="#9ad4ff" stroke-width="0.8"/></svg><div class="hdot"></div><span style="position:absolute;left:69px;top:0px;line-height:18px;">Swisstopo - ch.swisstopo-karto.hangneigung</span></div><div class="row" style="top:795px"><svg width="16" height="15" viewBox="0 0 16 15" style="position:absolute;left:48px;top:0px"><rect x="0.5" y="0.5" width="15" height="13.5" fill="#fff"/><path d="M0.5 0.5 V14 H15.5 V0.5" fill="none" stroke="#6e6e6e" stroke-width="1"/><path d="M1 1 H15" stroke="#bfe6ee" stroke-width="1"/><rect x="2" y="2" width="12" height="10" fill="#3f88c8"/><path d="M2 12 V8 L4.5 5.8 L8.5 9.5 L11.5 5.8 L14 8 V12 Z" fill="#5c5c5c"/><circle cx="4.5" cy="5" r="1" fill="#9ad4ff"/><path d="M9 3.6 A1.6 1.6 0 1 0 9.4 6.6" stroke="#a8ecff" stroke-width="1" fill="none"/><path d="M11.5 2.6 v2.4 M10.3 3.8 h2.4" stroke="#9ad4ff" stroke-width="0.8"/></svg><div class="hdot"></div><span style="position:absolute;left:69px;top:0px;line-height:18px;">Swisstopo - ch.swisstopo-karto.schneeschuhrouten</span></div><div class="row" style="top:813px"><svg width="16" height="15" viewBox="0 0 16 15" style="position:absolute;left:48px;top:0px"><rect x="0.5" y="0.5" width="15" height="13.5" fill="#fff"/><path d="M0.5 0.5 V14 H15.5 V0.5" fill="none" stroke="#6e6e6e" stroke-width="1"/><path d="M1 1 H15" stroke="#bfe6ee" stroke-width="1"/><rect x="2" y="2" width="12" height="10" fill="#3f88c8"/><path d="M2 12 V8 L4.5 5.8 L8.5 9.5 L11.5 5.8 L14 8 V12 Z" fill="#5c5c5c"/><circle cx="4.5" cy="5" r="1" fill="#9ad4ff"/><path d="M9 3.6 A1.6 1.6 0 1 0 9.4 6.6" stroke="#a8ecff" stroke-width="1" fill="none"/><path d="M11.5 2.6 v2.4 M10.3 3.8 h2.4" stroke="#9ad4ff" stroke-width="0.8"/></svg><div class="hdot"></div><span style="position:absolute;left:69px;top:0px;line-height:18px;">Swisstopo - ch.swisstopo-karto.skitouren</span></div><div class="row" style="top:831px"><svg width="16" height="15" viewBox="0 0 16 15" style="position:absolute;left:48px;top:0px"><rect x="0.5" y="0.5" width="15" height="13.5" fill="#fff"/><path d="M0.5 0.5 V14 H15.5 V0.5" fill="none" stroke="#6e6e6e" stroke-width="1"/><path d="M1 1 H15" stroke="#bfe6ee" stroke-width="1"/><rect x="2" y="2" width="12" height="10" fill="#3f88c8"/><path d="M2 12 V8 L4.5 5.8 L8.5 9.5 L11.5 5.8 L14 8 V12 Z" fill="#5c5c5c"/><circle cx="4.5" cy="5" r="1" fill="#9ad4ff"/><path d="M9 3.6 A1.6 1.6 0 1 0 9.4 6.6" stroke="#a8ecff" stroke-width="1" fill="none"/><path d="M11.5 2.6 v2.4 M10.3 3.8 h2.4" stroke="#9ad4ff" stroke-width="0.8"/></svg><div class="hdot"></div><span style="position:absolute;left:69px;top:0px;line-height:18px;">Swisstopo - ch.swisstopo-vd.spannungsarme-gebiete</span></div><div class="row" style="top:849px"><svg width="16" height="15" viewBox="0 0 16 15" style="position:absolute;left:48px;top:0px"><rect x="0.5" y="0.5" width="15" height="13.5" fill="#fff"/><path d="M0.5 0.5 V14 H15.5 V0.5" fill="none" stroke="#6e6e6e" stroke-width="1"/><path d="M1 1 H15" stroke="#bfe6ee" stroke-width="1"/><rect x="2" y="2" width="12" height="10" fill="#3f88c8"/><path d="M2 12 V8 L4.5 5.8 L8.5 9.5 L11.5 5.8 L14 8 V12 Z" fill="#5c5c5c"/><circle cx="4.5" cy="5" r="1" fill="#9ad4ff"/><path d="M9 3.6 A1.6 1.6 0 1 0 9.4 6.6" stroke="#a8ecff" stroke-width="1" fill="none"/><path d="M11.5 2.6 v2.4 M10.3 3.8 h2.4" stroke="#9ad4ff" stroke-width="0.8"/></svg><div class="hdot"></div><span style="position:absolute;left:69px;top:0px;line-height:18px;">Swisstopo - ch.swisstopo.bahnen-winter</span></div><div class="row" style="top:867px"><svg width="16" height="15" viewBox="0 0 16 15" style="position:absolute;left:48px;top:0px"><rect x="0.5" y="0.5" width="15" height="13.5" fill="#fff"/><path d="M0.5 0.5 V14 H15.5 V0.5" fill="none" stroke="#6e6e6e" stroke-width="1"/><path d="M1 1 H15" stroke="#bfe6ee" stroke-width="1"/><rect x="2" y="2" width="12" height="10" fill="#3f88c8"/><path d="M2 12 V8 L4.5 5.8 L8.5 9.5 L11.5 5.8 L14 8 V12 Z" fill="#5c5c5c"/><circle cx="4.5" cy="5" r="1" fill="#9ad4ff"/><path d="M9 3.6 A1.6 1.6 0 1 0 9.4 6.6" stroke="#a8ecff" stroke-width="1" fill="none"/><path d="M11.5 2.6 v2.4 M10.3 3.8 h2.4" stroke="#9ad4ff" stroke-width="0.8"/></svg><div class="hdot"></div><span style="position:absolute;left:69px;top:0px;line-height:18px;">Swisstopo - ch.swisstopo.digitales-hoehenmodell_25_reliefschattierung</span></div><div class="row" style="top:885px"><svg width="16" height="15" viewBox="0 0 16 15" style="position:absolute;left:48px;top:0px"><rect x="0.5" y="0.5" width="15" height="13.5" fill="#fff"/><path d="M0.5 0.5 V14 H15.5 V0.5" fill="none" stroke="#6e6e6e" stroke-width="1"/><path d="M1 1 H15" stroke="#bfe6ee" stroke-width="1"/><rect x="2" y="2" width="12" height="10" fill="#3f88c8"/><path d="M2 12 V8 L4.5 5.8 L8.5 9.5 L11.5 5.8 L14 8 V12 Z" fill="#5c5c5c"/><circle cx="4.5" cy="5" r="1" fill="#9ad4ff"/><path d="M9 3.6 A1.6 1.6 0 1 0 9.4 6.6" stroke="#a8ecff" stroke-width="1" fill="none"/><path d="M11.5 2.6 v2.4 M10.3 3.8 h2.4" stroke="#9ad4ff" stroke-width="0.8"/></svg><div class="hdot"></div><span style="position:absolute;left:69px;top:0px;line-height:18px;">Swisstopo - ch.swisstopo.dreiecksvermaschung</span></div><div class="row" style="top:903px"><svg width="16" height="15" viewBox="0 0 16 15" style="position:absolute;left:48px;top:0px"><rect x="0.5" y="0.5" width="15" height="13.5" fill="#fff"/><path d="M0.5 0.5 V14 H15.5 V0.5" fill="none" stroke="#6e6e6e" stroke-width="1"/><path d="M1 1 H15" stroke="#bfe6ee" stroke-width="1"/><rect x="2" y="2" width="12" height="10" fill="#3f88c8"/><path d="M2 12 V8 L4.5 5.8 L8.5 9.5 L11.5 5.8 L14 8 V12 Z" fill="#5c5c5c"/><circle cx="4.5" cy="5" r="1" fill="#9ad4ff"/><path d="M9 3.6 A1.6 1.6 0 1 0 9.4 6.6" stroke="#a8ecff" stroke-width="1" fill="none"/><path d="M11.5 2.6 v2.4 M10.3 3.8 h2.4" stroke="#9ad4ff" stroke-width="0.8"/></svg><div class="hdot"></div><span style="position:absolute;left:69px;top:0px;line-height:18px;">Swisstopo - ch.swisstopo.fixpunkte-agnes</span></div><div class="row" style="top:921px"><svg width="16" height="15" viewBox="0 0 16 15" style="position:absolute;left:48px;top:0px"><rect x="0.5" y="0.5" width="15" height="13.5" fill="#fff"/><path d="M0.5 0.5 V14 H15.5 V0.5" fill="none" stroke="#6e6e6e" stroke-width="1"/><path d="M1 1 H15" stroke="#bfe6ee" stroke-width="1"/><rect x="2" y="2" width="12" height="10" fill="#3f88c8"/><path d="M2 12 V8 L4.5 5.8 L8.5 9.5 L11.5 5.8 L14 8 V12 Z" fill="#5c5c5c"/><circle cx="4.5" cy="5" r="1" fill="#9ad4ff"/><path d="M9 3.6 A1.6 1.6 0 1 0 9.4 6.6" stroke="#a8ecff" stroke-width="1" fill="none"/><path d="M11.5 2.6 v2.4 M10.3 3.8 h2.4" stroke="#9ad4ff" stroke-width="0.8"/></svg><div class="hdot"></div><span style="position:absolute;left:69px;top:0px;line-height:18px;">Swisstopo - ch.swisstopo.geoidmodell-ch1903</span></div><div class="row" style="top:939px"><svg width="16" height="15" viewBox="0 0 16 15" style="position:absolute;left:48px;top:0px"><rect x="0.5" y="0.5" width="15" height="13.5" fill="#fff"/><path d="M0.5 0.5 V14 H15.5 V0.5" fill="none" stroke="#6e6e6e" stroke-width="1"/><path d="M1 1 H15" stroke="#bfe6ee" stroke-width="1"/><rect x="2" y="2" width="12" height="10" fill="#3f88c8"/><path d="M2 12 V8 L4.5 5.8 L8.5 9.5 L11.5 5.8 L14 8 V12 Z" fill="#5c5c5c"/><circle cx="4.5" cy="5" r="1" fill="#9ad4ff"/><path d="M9 3.6 A1.6 1.6 0 1 0 9.4 6.6" stroke="#a8ecff" stroke-width="1" fill="none"/><path d="M11.5 2.6 v2.4 M10.3 3.8 h2.4" stroke="#9ad4ff" stroke-width="0.8"/></svg><div class="hdot"></div><span style="position:absolute;left:69px;top:0px;line-height:18px;">Swisstopo - ch.swisstopo.geoidmodell-etrs89</span></div><div class="row" style="top:957px"><svg width="16" height="15" viewBox="0 0 16 15" style="position:absolute;left:48px;top:0px"><rect x="0.5" y="0.5" width="15" height="13.5" fill="#fff"/><path d="M0.5 0.5 V14 H15.5 V0.5" fill="none" stroke="#6e6e6e" stroke-width="1"/><path d="M1 1 H15" stroke="#bfe6ee" stroke-width="1"/><rect x="2" y="2" width="12" height="10" fill="#3f88c8"/><path d="M2 12 V8 L4.5 5.8 L8.5 9.5 L11.5 5.8 L14 8 V12 Z" fill="#5c5c5c"/><circle cx="4.5" cy="5" r="1" fill="#9ad4ff"/><path d="M9 3.6 A1.6 1.6 0 1 0 9.4 6.6" stroke="#a8ecff" stroke-width="1" fill="none"/><path d="M11.5 2.6 v2.4 M10.3 3.8 h2.4" stroke="#9ad4ff" stroke-width="0.8"/></svg><div class="hdot"></div><span style="position:absolute;left:69px;top:0px;line-height:18px;">Swisstopo - ch.swisstopo.geologie-bodenunruhe</span></div><div class="row" style="top:975px"><svg width="16" height="15" viewBox="0 0 16 15" style="position:absolute;left:48px;top:0px"><rect x="0.5" y="0.5" width="15" height="13.5" fill="#fff"/><path d="M0.5 0.5 V14 H15.5 V0.5" fill="none" stroke="#6e6e6e" stroke-width="1"/><path d="M1 1 H15" stroke="#bfe6ee" stroke-width="1"/><rect x="2" y="2" width="12" height="10" fill="#3f88c8"/><path d="M2 12 V8 L4.5 5.8 L8.5 9.5 L11.5 5.8 L14 8 V12 Z" fill="#5c5c5c"/><circle cx="4.5" cy="5" r="1" fill="#9ad4ff"/><path d="M9 3.6 A1.6 1.6 0 1 0 9.4 6.6" stroke="#a8ecff" stroke-width="1" fill="none"/><path d="M11.5 2.6 v2.4 M10.3 3.8 h2.4" stroke="#9ad4ff" stroke-width="0.8"/></svg><div class="hdot"></div><span style="position:absolute;left:69px;top:0px;line-height:18px;">Swisstopo - ch.swisstopo.geologie-dosisleistung-terrestrisch</span></div><div class="row" style="top:993px"><svg width="16" height="15" viewBox="0 0 16 15" style="position:absolute;left:48px;top:0px"><rect x="0.5" y="0.5" width="15" height="13.5" fill="#fff"/><path d="M0.5 0.5 V14 H15.5 V0.5" fill="none" stroke="#6e6e6e" stroke-width="1"/><path d="M1 1 H15" stroke="#bfe6ee" stroke-width="1"/><rect x="2" y="2" width="12" height="10" fill="#3f88c8"/><path d="M2 12 V8 L4.5 5.8 L8.5 9.5 L11.5 5.8 L14 8 V12 Z" fill="#5c5c5c"/><circle cx="4.5" cy="5" r="1" fill="#9ad4ff"/><path d="M9 3.6 A1.6 1.6 0 1 0 9.4 6.6" stroke="#a8ecff" stroke-width="1" fill="none"/><path d="M11.5 2.6 v2.4 M10.3 3.8 h2.4" stroke="#9ad4ff" stroke-width="0.8"/></svg><div class="hdot"></div><span style="position:absolute;left:69px;top:0px;line-height:18px;">Swisstopo - ch.swisstopo.geologie-eiszeit-lgm</span></div>
</div>
<!-- scrollbar -->
<div class="abs" style="left:573px;top:110px;width:20px;height:899px;background:#f0f0f0"></div>
<div class="abs" style="left:581px;top:569px;width:2px;height:102px;background:#888"></div>
<!-- right panel -->
<div class="abs" style="left:600px;top:44px;width:1320px;height:970px;border-top:1px solid #a0a0a0"></div>
<div class="abs" style="left:600px;top:45px;width:1320px;height:29px;background:#f0f0f0"></div>
<div class="abs" style="left:599px;top:74px;width:1321px;height:939px;background:#fff;border-right:2px solid #888;border-bottom:2px solid #888"></div>
<svg class="abs" style="left:606px;top:46px" width="26" height="24" viewBox="606 46 26 24" shape-rendering="crispEdges"><g fill="#000050"><rect x="615" y="51" width="6" height="1"/><rect x="613" y="52" width="2" height="1"/><rect x="621" y="52" width="2" height="1"/><rect x="613" y="53" width="1" height="2"/><rect x="622" y="53" width="1" height="2"/><rect x="612" y="55" width="1" height="3"/><rect x="623" y="55" width="1" height="3"/><rect x="613" y="58" width="1" height="2"/><rect x="622" y="58" width="1" height="2"/><rect x="614" y="60" width="2" height="1"/><rect x="620" y="60" width="2" height="1"/><rect x="616" y="61" width="4" height="1"/><rect x="617" y="54" width="2" height="6"/><rect x="615" y="56" width="6" height="2"/></g><path d="M621.5 60.5 L626.5 65.5" stroke="#000050" stroke-width="2.2" shape-rendering="auto"/><path d="M613 52 h10 v10 h-10z" fill="none"/></svg>
<span class="abs" style="left:632px;top:53px;line-height:15px;letter-spacing:0.55px">Zoom in</span>
<span class="abs" style="left:718px;top:53px;line-height:15px;letter-spacing:0.45px;color:#a0a0a0">Zoom out</span>
<div class="abs" style="left:783px;top:48px;width:1px;height:22px;background:#a0a0a0"></div>
<div class="abs" style="left:788px;top:48px;width:89px;height:22px;background:#f8f8f8;border-top:1px solid #a0a0a0;border-left:1px solid #a0a0a0"></div>
<svg class="abs" style="left:798px;top:50px" width="20" height="20" viewBox="0 0 20 20"><path d="M4.5 8.5 L7.5 8.2 V4.5 Q7.5 4 8.5 4 Q9.5 4 9.5 4.5 V4.5 Q10.5 4 11.5 4.5 Q12.5 4 13.5 5 Q14.5 5.5 14.5 7 V13.5 L13.5 16.5 H8.5 L5 11 Z" fill="#fff"/><path d="M7.5 4 V9 M9.5 4.5 V8 M11.5 4.5 V8 M13.5 5.5 L14.5 6.5 V13.5 L13.5 16 M4 8.5 H6.5 M5 10 L8.5 15.5 L9 16.5 H13.5" fill="none" stroke="#333" stroke-width="1"/></svg>
<span class="abs" style="left:819px;top:53px;line-height:15px;letter-spacing:0.3px">Pan map</span>
<svg class="abs" style="left:885px;top:51px" width="16" height="16" viewBox="0 0 16 16"><rect x="1.5" y="1.5" width="13" height="13" rx="2" fill="none" stroke="#222" stroke-width="1.3" stroke-dasharray="3 2"/></svg>
<span class="abs" style="left:906px;top:52px;line-height:15px;letter-spacing:0.2px">Rectangle</span>
<div class="abs" style="left:976px;top:48px;width:280px;height:22px;background:#fff"></div>
<svg class="abs" style="left:1263px;top:50px" width="16" height="17" viewBox="0 0 16 17"><path d="M7.5 1 V11 M3.5 7 L7.5 11 L11.5 7" fill="none" stroke="#444" stroke-width="1.1"/><path d="M1.5 11.5 V14 Q1.5 15.5 3 15.5 H12 Q13.5 15.5 13.5 14 V11.5" fill="none" stroke="#444" stroke-width="1.1"/></svg>
<span class="abs" style="left:1283px;top:52px;line-height:15px;letter-spacing:0.25px">Download</span>
<!-- map -->
<div class="abs" style="left:0;top:0;width:1920px;height:1032px;pointer-events:none"><svg width="1920" height="1032" style="position:absolute;left:0;top:0">
<polygon points="970.0,463.8 975.0,456.2 983.8,447.5 987.5,440.0 987.5,437.5 988.3,431.7 999.2,426.7 1000.0,421.7 1007.5,418.3 1005.8,413.3 1000.8,410.0 995.0,411.7 985.0,412.5 975.8,414.2 976.7,408.3 981.7,401.7 985.8,398.3 987.5,392.5 992.5,389.2 996.7,388.3 995.8,383.3 995.0,376.7 1000.8,374.2 1010.0,377.5 1021.7,374.2 1034.2,376.7 1030.0,383.3 1030.8,390.8 1040.0,391.7 1043.3,395.0 1050.0,392.5 1057.5,391.7 1062.5,392.5 1066.7,393.3 1074.2,389.2 1078.3,386.7 1075.0,379.2 1078.3,375.8 1083.3,380.0 1090.0,375.8 1090.8,370.0 1088.3,370.8 1088.5,363.8 1091.3,362.0 1098.8,357.3 1099.7,354.4 1105.4,351.6 1108.2,353.5 1115.7,348.8 1119.5,350.7 1123.2,355.4 1117.6,361.0 1121.4,365.7 1128.9,364.8 1136.4,362.0 1145.8,352.6 1155.2,351.1 1160.8,352.6 1163.6,361.0 1170.2,362.0 1173.0,360.1 1181.5,360.1 1190.9,358.2 1197.5,358.2 1200.3,352.6 1206.9,348.8 1215.3,343.2 1220.0,344.1 1222.9,345.0 1230.4,345.0 1234.1,348.8 1237.9,355.4 1249.2,356.3 1254.8,355.4 1256.7,356.7 1269.2,352.5 1263.3,348.3 1265.0,345.0 1273.3,339.2 1282.5,343.3 1285.0,348.3 1288.3,345.8 1290.0,338.3 1293.3,335.0 1290.0,331.7 1294.2,324.2 1298.3,323.3 1301.7,325.0 1305.8,322.5 1313.3,323.3 1320.0,325.8 1324.2,328.3 1333.3,331.7 1340.0,333.3 1344.2,335.0 1352.5,331.7 1365.0,325.0 1377.5,326.7 1388.3,330.0 1392.5,331.2 1407.5,332.5 1417.5,335.0 1435.0,342.5 1442.5,350.0 1452.5,362.5 1463.3,363.3 1464.2,373.3 1470.0,382.5 1473.3,385.8 1481.7,387.5 1477.5,396.7 1484.2,405.8 1480.8,410.0 1473.2,413.9 1470.1,420.2 1468.2,425.2 1463.8,428.3 1461.3,434.6 1458.1,437.8 1455.6,445.4 1451.8,453.5 1451.2,465.0 1452.5,470.0 1455.0,482.5 1450.0,492.5 1460.0,493.8 1472.5,495.0 1485.0,493.8 1500.0,497.5 1510.0,502.5 1520.0,503.8 1522.5,512.5 1522.5,525.0 1535.0,532.5 1550.0,540.0 1560.0,547.5 1572.5,547.5 1585.0,540.0 1587.5,528.8 1600.0,527.5 1602.5,515.0 1612.5,510.0 1620.0,517.5 1632.5,525.0 1631.2,540.0 1627.5,555.0 1622.5,567.5 1622.5,577.5 1617.5,585.0 1615.0,597.5 1620.0,605.0 1627.5,607.5 1632.5,615.0 1630.0,630.0 1622.5,632.5 1610.0,630.0 1600.0,627.5 1590.0,615.0 1587.5,607.5 1575.0,612.5 1560.0,617.5 1555.0,630.0 1552.5,642.5 1553.8,660.0 1567.5,662.5 1572.5,665.0 1567.5,680.0 1562.5,687.5 1570.0,695.0 1575.0,705.0 1570.0,710.0 1557.5,715.0 1552.5,707.5 1547.5,697.5 1542.5,687.5 1540.0,677.5 1532.5,675.0 1515.0,680.0 1500.0,682.5 1492.5,690.0 1477.5,697.5 1465.0,692.5 1455.0,685.0 1447.5,672.5 1445.0,655.0 1445.0,642.5 1437.5,650.0 1430.0,642.5 1417.5,642.5 1407.5,655.0 1412.5,662.5 1415.0,680.0 1410.0,695.0 1405.0,710.0 1397.5,717.5 1390.8,728.7 1376.4,742.0 1377.5,753.0 1364.2,764.1 1366.4,773.0 1362.0,781.9 1368.7,793.0 1377.5,799.6 1373.1,808.5 1364.2,820.7 1346.5,815.2 1350.9,808.5 1344.3,790.8 1337.6,781.9 1324.3,775.2 1328.7,768.6 1335.4,759.7 1333.2,753.0 1324.3,748.6 1315.4,742.0 1308.8,746.4 1293.2,742.0 1286.6,733.1 1275.5,715.3 1262.2,708.7 1258.9,695.4 1264.4,684.3 1264.4,666.5 1262.2,653.2 1248.9,653.2 1235.0,662.5 1237.5,667.5 1225.0,680.0 1210.0,695.0 1195.0,705.0 1210.0,725.0 1205.0,737.5 1185.0,747.5 1177.5,772.5 1160.0,775.0 1155.0,792.5 1142.5,792.5 1127.5,792.5 1120.0,780.0 1097.5,777.5 1085.0,785.0 1070.0,797.5 1050.0,795.0 1035.0,807.5 1027.5,805.0 1015.0,807.5 1005.0,790.0 1000.0,777.5 985.0,757.5 975.0,760.0 975.0,742.5 960.0,732.5 962.5,715.0 972.5,700.0 965.0,692.5 956.2,680.0 965.0,662.5 950.0,657.5 932.5,653.8 907.5,653.8 900.0,659.2 895.9,661.3 887.4,664.5 877.8,666.7 869.3,672.0 861.8,678.4 857.6,685.8 855.4,692.2 859.7,694.4 861.8,704.0 866.1,707.2 869.3,704.0 872.5,708.2 868.2,714.6 861.8,717.8 855.4,723.2 849.0,729.6 840.5,735.9 830.9,733.8 822.4,737.0 816.0,737.0 808.5,739.1 810.7,732.8 813.9,726.4 809.6,723.2 811.7,716.8 819.2,713.6 824.5,711.4 834.1,710.4 837.3,706.1 835.2,699.7 837.3,693.3 840.5,688.0 846.9,677.3 842.6,673.0 835.2,668.8 828.3,663.5 830.9,658.1 829.9,651.7 832.0,648.5 836.2,640.0 840.0,635.0 837.5,622.5 845.0,615.0 857.5,600.0 867.5,592.5 880.0,585.0 887.5,577.5 897.5,570.0 900.0,560.0 900.0,550.0 895.0,527.5 905.0,516.2 917.5,513.8 925.0,511.2 932.5,505.0 942.5,493.8 947.5,485.0 960.0,477.5 972.5,468.8" fill="#d2ed00" stroke="#666" stroke-width="1.4"/>
<polygon points="970.0,463.8 975.0,456.2 983.8,447.5 987.5,440.0 987.5,437.5 988.3,431.7 999.2,426.7 1000.0,421.7 1007.5,418.3 1005.8,413.3 1000.8,410.0 995.0,411.7 985.0,412.5 975.8,414.2 976.7,408.3 981.7,401.7 985.8,398.3 987.5,392.5 992.5,389.2 996.7,388.3 995.8,383.3 995.0,376.7 1000.8,374.2 1010.0,377.5 1021.7,374.2 1034.2,376.7 1030.0,383.3 1030.8,390.8 1040.0,391.7 1043.3,395.0 1050.0,392.5 1057.5,391.7 1066.7,398.3 1073.3,406.7 1085.0,409.2 1093.3,410.0 1097.5,416.7 1094.2,423.3 1090.0,426.7 1076.7,426.7 1060.0,428.3 1055.8,430.8 1047.5,432.5 1035.0,430.8 1029.2,431.7 1025.0,437.5 1025.0,442.5 1012.5,445.0 1000.0,455.0 992.5,462.5 976.2,468.1" fill="#38a800" stroke="#666" stroke-width="1.4"/>
<polygon points="1057.5,391.7 1062.5,392.5 1066.7,393.3 1074.2,389.2 1078.3,386.7 1075.0,379.2 1078.3,375.8 1083.3,380.0 1090.0,375.8 1090.8,370.0 1088.3,370.8 1088.5,363.8 1091.3,362.0 1098.8,357.3 1099.7,358.2 1101.6,362.9 1106.3,368.5 1108.2,364.8 1112.0,360.1 1115.7,358.2 1123.2,355.4 1117.6,361.0 1121.4,365.7 1128.9,364.8 1138.3,368.5 1141.1,375.1 1145.8,374.2 1149.5,367.6 1153.3,366.7 1161.8,377.0 1169.3,380.8 1170.2,385.5 1174.0,387.3 1176.8,393.9 1174.0,396.7 1181.5,401.4 1184.3,405.2 1183.4,411.8 1180.6,417.4 1174.0,423.0 1164.6,420.2 1160.0,424.0 1155.0,426.7 1152.5,433.3 1148.3,438.3 1140.0,437.9 1131.7,439.2 1122.5,430.4 1104.2,435.8 1105.8,442.5 1110.8,446.7 1115.0,448.3 1116.7,454.2 1120.0,457.5 1120.0,463.3 1115.0,468.3 1105.8,468.3 1103.3,465.0 1095.0,465.8 1093.3,470.0 1090.0,476.7 1081.7,480.8 1082.5,487.5 1078.3,488.3 1076.7,482.5 1070.0,483.3 1065.8,480.0 1066.7,476.7 1076.7,475.8 1075.8,472.5 1079.2,469.2 1083.3,467.5 1087.5,463.3 1084.2,458.8 1079.2,459.2 1073.3,463.3 1068.3,465.0 1065.0,458.3 1060.8,455.0 1060.8,450.8 1073.3,445.0 1074.2,442.5 1081.7,439.2 1085.0,435.0 1091.7,430.8 1096.7,425.0 1094.2,423.3 1097.5,416.7 1093.3,410.0 1085.0,409.2 1073.3,406.7 1066.7,398.3" fill="#ffff00" stroke="#666" stroke-width="1.4"/>
<polygon points="1099.7,354.4 1105.4,351.6 1108.2,353.5 1115.7,348.8 1119.5,350.7 1123.2,355.4 1115.7,358.2 1112.0,360.1 1108.2,364.8 1106.3,368.5 1101.6,362.9 1099.7,358.2" fill="#ff6600" stroke="#666" stroke-width="1.4"/>
<polygon points="1128.9,364.8 1136.4,362.0 1145.8,352.6 1155.2,351.1 1160.8,352.6 1163.6,361.0 1170.2,362.0 1173.0,360.1 1181.5,360.1 1190.9,358.2 1197.5,358.2 1200.3,352.6 1206.9,348.8 1215.3,343.2 1220.0,344.1 1222.9,345.0 1230.4,345.0 1234.1,348.8 1237.9,355.4 1249.2,356.3 1254.8,355.4 1253.9,362.9 1248.2,370.4 1246.4,375.1 1248.2,381.7 1248.2,395.8 1249.2,401.4 1251.1,408.0 1253.9,420.2 1256.7,427.0 1260.0,422.5 1252.5,435.0 1252.5,450.0 1255.0,471.2 1247.5,465.0 1240.0,447.5 1235.0,435.0 1222.5,435.0 1215.0,442.5 1210.0,447.5 1200.0,440.0 1190.0,442.5 1182.5,435.0 1170.0,437.5 1160.0,445.0 1148.8,445.0 1148.3,439.2 1152.5,433.3 1155.0,426.7 1160.0,424.0 1164.6,420.2 1174.0,423.0 1180.6,417.4 1183.4,411.8 1184.3,405.2 1181.5,401.4 1174.0,396.7 1176.8,393.9 1174.0,387.3 1170.2,385.5 1169.3,380.8 1161.8,377.0 1153.3,366.7 1149.5,367.6 1145.8,374.2 1141.1,375.1 1138.3,368.5" fill="#ff6600" stroke="#666" stroke-width="1.4"/>
<polygon points="1253.3,321.7 1256.7,316.7 1261.7,312.5 1263.3,306.7 1268.3,301.7 1275.8,300.0 1282.5,298.3 1282.5,292.5 1289.2,293.3 1292.5,295.0 1293.3,304.2 1296.7,303.3 1298.3,294.2 1303.3,297.5 1305.0,304.2 1311.7,304.2 1314.2,308.3 1310.0,312.5 1313.3,316.7 1311.7,321.7 1309.2,322.5 1306.7,320.0 1303.3,318.3 1300.0,323.3 1294.2,325.0 1291.7,327.5 1286.7,330.0 1280.8,331.7 1275.8,332.5 1271.7,335.0 1265.8,336.7 1264.2,333.3 1259.2,331.7 1254.2,328.3" fill="#ff0000" stroke="#666" stroke-width="1.4"/>
<polygon points="1320.0,315.0 1325.8,311.7 1328.3,316.7 1331.7,318.3 1338.3,320.0 1337.5,322.5 1334.2,323.3 1338.3,329.2 1339.2,333.3 1335.0,334.2 1331.7,330.0 1326.7,326.7 1324.2,323.3 1321.7,320.0" fill="#ff0000" stroke="#666" stroke-width="1.4"/>
<polygon points="1277.5,351.7 1280.8,349.2 1285.0,348.3 1288.3,345.8 1286.7,350.0 1284.2,354.2 1280.8,360.0 1278.3,355.8" fill="#ff0000" stroke="#666" stroke-width="1.4"/>
<polygon points="1253.8,447.5 1262.5,450.0 1275.0,451.2 1285.0,452.5 1292.5,457.5 1300.0,465.0 1305.0,470.0 1300.0,477.5 1292.5,482.5 1282.5,485.0 1272.5,482.5 1265.0,477.5 1260.0,475.0 1255.0,470.0 1253.8,460.0" fill="#ffff00" stroke="#666" stroke-width="1.4"/>
<polygon points="1352.5,406.7 1359.2,395.0 1365.0,390.0 1372.5,390.0 1367.5,386.7 1363.3,381.7 1364.2,377.5 1375.8,376.7 1383.3,380.0 1391.7,375.0 1398.3,378.3 1408.3,381.7 1416.7,378.3 1418.3,375.0 1411.7,372.5 1420.0,366.7 1425.8,369.2 1426.7,373.3 1433.3,380.8 1452.5,361.7 1463.3,363.3 1464.2,373.3 1470.0,382.5 1473.3,385.8 1481.7,387.5 1477.5,396.7 1484.2,405.8 1480.8,410.0 1473.2,413.9 1470.1,420.2 1468.2,425.2 1463.8,428.3 1461.3,434.6 1458.1,437.8 1455.6,445.4 1451.8,453.5 1451.2,465.0 1452.5,470.0 1455.0,482.5 1450.0,492.5 1450.0,495.0 1460.0,515.0 1450.0,530.0 1443.8,540.0 1425.0,536.2 1407.5,533.8 1405.0,522.5 1405.8,506.0 1393.3,500.8 1388.3,498.3 1396.7,490.8 1395.8,475.8 1374.2,474.2 1361.7,462.5 1355.0,460.0 1356.7,451.7 1330.8,452.5 1325.8,448.3 1326.7,443.3 1350.0,439.2 1351.7,432.5 1357.5,426.7 1356.7,415.0" fill="#ffff00" stroke="#666" stroke-width="1.4"/>
<polygon points="1440.8,392.5 1455.0,387.5 1459.2,383.3 1473.3,386.7 1476.7,390.8 1463.3,402.5 1455.0,402.5 1453.1,415.7 1453.1,425.2 1451.2,431.5 1443.0,440.3 1432.3,446.0 1424.1,442.8 1420.3,443.5 1411.5,437.2 1400.2,435.3 1401.4,428.3 1400.8,418.9 1397.6,412.6 1402.0,405.0 1405.0,402.5 1415.0,402.5 1423.3,400.8 1438.3,400.0" fill="#d2ed00" stroke="#666" stroke-width="1.4"/>
<polygon points="1426.6,406.3 1430.4,405.7 1439.8,410.7 1446.8,415.7 1453.1,415.7 1453.1,425.2 1451.2,431.5 1443.0,440.3 1432.3,446.0 1424.1,442.8 1419.1,428.3 1419.1,421.4 1425.4,413.9" fill="#ff6600" stroke="#666" stroke-width="1.4"/>
<polygon points="1455.0,402.5 1460.8,394.2 1465.0,393.3 1472.5,392.5 1469.2,398.3 1463.3,402.5" fill="#ff6600" stroke="#666" stroke-width="1.4"/>
<polygon points="1450.0,495.0 1465.0,492.5 1482.5,493.8 1495.0,497.5 1510.0,502.5 1520.0,503.8 1522.5,512.5 1522.5,525.0 1535.0,532.5 1550.0,540.0 1560.0,547.5 1572.5,547.5 1585.0,540.0 1587.5,528.8 1600.0,527.5 1602.5,515.0 1612.5,510.0 1620.0,517.5 1632.5,525.0 1631.2,540.0 1627.5,555.0 1622.5,567.5 1622.5,577.5 1617.5,585.0 1615.0,597.5 1620.0,605.0 1627.5,607.5 1632.5,615.0 1630.0,630.0 1622.5,632.5 1610.0,630.0 1600.0,627.5 1590.0,615.0 1587.5,607.5 1575.0,612.5 1560.0,617.5 1555.0,630.0 1552.5,642.5 1553.8,660.0 1567.5,662.5 1572.5,665.0 1567.5,680.0 1562.5,687.5 1570.0,695.0 1575.0,705.0 1570.0,710.0 1557.5,715.0 1552.5,707.5 1547.5,697.5 1542.5,687.5 1540.0,677.5 1532.5,675.0 1515.0,680.0 1500.0,682.5 1492.5,690.0 1477.5,697.5 1465.0,692.5 1455.0,685.0 1447.5,672.5 1445.0,655.0 1445.0,642.5 1437.5,650.0 1430.0,642.5 1417.5,642.5 1407.5,655.0 1412.5,662.5 1415.0,680.0 1410.0,695.0 1405.0,710.0 1397.5,717.5 1392.5,727.5 1385.0,725.0 1377.5,715.0 1375.0,697.5 1378.8,680.0 1380.0,660.0 1377.5,650.0 1370.0,640.0 1366.2,625.0 1360.0,615.0 1352.5,610.0 1342.5,612.5 1330.0,625.0 1317.5,623.8 1305.0,622.5 1302.5,610.0 1300.0,602.5 1305.0,590.0 1317.5,580.0 1330.0,570.0 1337.5,560.0 1352.5,557.5 1365.0,555.0 1372.5,543.8 1382.5,547.5 1395.0,540.0 1407.5,535.0 1425.0,536.2 1442.5,540.0 1450.0,530.0 1460.0,515.0" fill="#ff6600" stroke="#666" stroke-width="1.4"/>
<polygon points="1188.2,551.7 1192.6,537.8 1197.0,533.4 1200.2,537.2 1203.9,530.3 1209.0,525.9 1207.7,520.2 1214.0,517.0 1220.9,516.4 1220.9,512.0 1227.9,510.1 1236.7,509.5 1241.1,511.4 1247.4,504.4 1249.3,509.5 1257.5,509.5 1258.1,504.4 1265.0,506.3 1265.7,512.6 1271.3,515.2 1283.3,513.3 1280.8,523.3 1278.3,529.0 1265.0,534.7 1266.3,539.1 1265.0,547.3 1270.7,549.8 1269.4,554.8 1268.2,557.8 1268.2,569.8 1252.4,570.4 1246.8,565.4 1230.4,574.2 1220.3,571.0 1206.5,572.9 1196.4,566.6 1189.4,564.1" fill="#ff0000" stroke="#666" stroke-width="1.4"/>
<polygon points="900.0,550.0 915.0,545.0 930.0,536.2 945.0,527.5 950.0,542.5 956.2,547.5 952.5,555.0 958.8,563.8 975.0,568.8 982.5,572.5 986.2,580.0 980.0,587.5 972.5,595.0 965.0,600.0 961.2,606.2 962.5,620.0 975.0,625.0 977.5,630.0 965.0,633.8 966.2,640.0 980.0,640.0 990.0,645.0 996.2,656.2 1007.5,645.0 1020.0,640.0 1033.8,632.5 1041.2,630.0 1042.5,645.0 1035.0,660.0 1036.2,677.5 1037.5,687.5 1032.5,695.0 1026.2,705.0 1020.0,712.5 1005.0,722.5 997.5,712.5 990.0,700.0 985.0,690.0 977.5,680.0 970.0,670.0 963.8,662.5 950.0,657.5 932.5,653.8 907.5,653.8 900.0,659.2 895.9,661.3 887.4,664.5 877.8,666.7 869.3,672.0 861.8,678.4 857.6,685.8 855.4,692.2 859.7,694.4 861.8,704.0 866.1,707.2 869.3,704.0 872.5,708.2 868.2,714.6 861.8,717.8 855.4,723.2 849.0,729.6 840.5,735.9 830.9,733.8 822.4,737.0 816.0,737.0 808.5,739.1 810.7,732.8 813.9,726.4 809.6,723.2 811.7,716.8 819.2,713.6 824.5,711.4 834.1,710.4 837.3,706.1 835.2,699.7 837.3,693.3 840.5,688.0 846.9,677.3 842.6,673.0 835.2,668.8 828.3,663.5 830.9,658.1 829.9,651.7 832.0,648.5 836.2,640.0 840.0,635.0 837.5,622.5 845.0,615.0 857.5,600.0 867.5,592.5 880.0,585.0 887.5,577.5 897.5,570.0 900.0,560.0" fill="#ffff00" stroke="#666" stroke-width="1.4"/>
<polygon points="985.6,521.9 998.8,513.8 1007.5,515.0 1010.0,526.2 1013.8,533.8 1010.0,540.0 1005.0,550.0 1000.0,542.5 997.5,538.8" fill="#ffff00" stroke="#666" stroke-width="1.4"/>
<polygon points="974.4,533.8 980.0,529.4 990.0,542.5 993.8,540.0 995.6,546.2 992.5,552.5 991.9,558.8 987.5,565.0 985.0,569.0 980.0,569.0 982.5,560.0 983.8,552.5 980.0,546.2 978.8,540.0" fill="#ffff00" stroke="#666" stroke-width="1.4"/>
<polygon points="952.3,579.3 958.1,575.8 960.5,581.6 954.7,584.0" fill="#d2ed00" stroke="#666" stroke-width="1.4"/>
<polygon points="960.5,580.5 967.4,572.3 974.4,570.0 976.7,578.1 972.1,581.6 962.8,582.8" fill="#d2ed00" stroke="#666" stroke-width="1.4"/>
<polyline points="1037.5,680.0 1052.5,676.2 1075.0,672.5 1097.5,667.5 1112.5,657.5 1125.0,663.8 1150.0,647.5 1172.5,635.0 1180.0,626.2 1190.0,626.2 1212.5,635.0 1240.0,627.5 1250.0,620.0" fill="none" stroke="#666" stroke-width="1.4"/>
<polyline points="1150.0,445.0 1153.3,453.3 1158.3,461.7 1156.7,475.0 1155.0,486.7 1156.7,498.3 1161.7,506.7 1170.0,508.3 1168.3,520.0 1161.7,526.7 1156.7,533.3 1155.0,545.0 1163.3,555.0 1175.0,566.7 1190.0,565.0" fill="none" stroke="#666" stroke-width="1.4"/>
<polyline points="1253.3,445.0 1255.0,470.0 1261.7,477.5 1253.3,486.7 1251.7,491.7 1261.7,496.7 1271.7,503.3 1266.7,510.0" fill="none" stroke="#666" stroke-width="1.4"/>
<polyline points="1283.3,513.3 1286.7,511.7 1290.0,520.0 1303.3,523.3 1308.3,528.3 1323.3,525.0 1331.7,530.0 1335.0,538.3 1353.3,528.3 1355.0,520.0 1350.0,508.3 1343.3,501.7 1351.7,495.0 1356.7,486.7 1355.0,475.0 1361.7,463.3 1356.7,460.0 1355.0,450.8 1336.7,451.7 1326.7,449.2 1308.3,453.3 1303.3,460.0" fill="none" stroke="#666" stroke-width="1.4"/>
<polyline points="1353.3,528.3 1355.0,540.0 1341.7,550.0 1340.0,558.3" fill="none" stroke="#666" stroke-width="1.4"/>
<polyline points="972.5,465.0 977.5,472.5 973.8,486.2 983.8,480.0 992.5,477.5 1003.8,475.6 1003.8,480.0 1011.2,483.8 1013.8,490.0 1011.2,496.2 1005.0,500.0 1002.5,510.0 1005.0,515.0" fill="none" stroke="#666" stroke-width="1.4"/>
<polyline points="1005.0,515.0 998.8,512.5 985.0,521.2 973.8,533.8 965.0,541.2 951.2,555.0 957.5,562.5 961.2,569.0" fill="none" stroke="#666" stroke-width="1.4"/>
<polyline points="1005.0,515.0 1008.8,515.0 1023.8,512.5 1036.2,508.1 1040.0,512.5 1035.0,518.8 1036.2,535.0 1042.5,536.2 1061.2,538.8 1062.5,545.0 1055.0,548.8 1057.5,555.0 1052.5,569.0 1052.5,575.0 1065.0,590.0 1062.5,605.0 1055.0,610.0 1050.0,620.0 1042.5,630.0" fill="none" stroke="#666" stroke-width="1.4"/>
<polyline points="1261.2,570.0 1260.0,580.0 1262.5,590.0 1252.5,592.5 1253.8,600.0 1256.2,606.2 1255.0,621.2 1258.8,630.0 1266.2,633.1" fill="none" stroke="#666" stroke-width="1.4"/>
<polyline points="1250.0,620.0 1247.5,607.5 1253.8,601.2" fill="none" stroke="#666" stroke-width="1.4"/>
<polyline points="1266.2,633.1 1250.0,643.8 1250.0,652.5" fill="none" stroke="#666" stroke-width="1.4"/>
<polyline points="1266.2,633.1 1273.8,631.2 1275.0,621.2 1285.0,620.0 1295.0,623.8 1303.8,620.0" fill="none" stroke="#666" stroke-width="1.4"/>
<polyline points="1301.7,325.0 1303.3,331.7 1308.3,335.0 1315.0,336.7 1320.0,335.0 1324.2,331.7 1326.7,335.0 1330.0,336.7 1326.7,345.0 1324.2,346.7 1319.2,343.3 1315.8,343.3 1315.8,349.2 1323.3,353.3 1327.5,355.8 1333.3,357.5 1331.7,364.2 1334.2,367.5 1343.3,371.0 1340.0,381.2 1345.0,392.5 1347.5,396.2 1352.5,407.5" fill="none" stroke="#666" stroke-width="1.4"/>
<polyline points="1452.5,361.7 1433.3,380.8" fill="none" stroke="#666" stroke-width="1.4"/>
<polyline points="846.9,678.4 858.6,682.6" fill="none" stroke="#666" stroke-width="1.4"/>
<polyline points="838.4,692.2 852.2,698.6 858.6,682.6" fill="none" stroke="#666" stroke-width="1.4"/>
<polyline points="1067.5,396.7 1079.2,390.0 1089.4,386.4 1095.0,384.5 1094.1,377.0 1084.2,380.0 1078.3,375.8" fill="none" stroke="#666" stroke-width="1.4"/>
<polyline points="1079.2,400.0 1087.5,404.2 1096.0,401.4 1098.8,395.8 1102.6,392.0 1108.2,391.1 1110.1,386.4 1109.1,378.9 1117.6,377.0 1126.1,382.6 1123.2,390.2 1121.4,395.8 1113.8,399.5 1115.7,408.9 1125.1,409.9 1132.6,414.6 1136.4,417.4 1143.9,416.5 1149.5,408.9 1157.1,402.4 1162.7,399.5 1168.3,397.7 1174.0,396.7" fill="none" stroke="#666" stroke-width="1.4"/>
<polyline points="1220.9,513.9 1234.8,515.2 1235.4,521.5 1232.9,525.9 1236.7,527.8 1241.7,529.0 1240.5,538.9 1239.8,548.3 1239.2,556.5 1243.0,562.8 1247.4,565.4 1255.6,566.6 1256.9,569.1" fill="none" stroke="#999" stroke-width="1.3"/>
<polyline points="1270.7,549.0 1263.8,547.7 1256.9,548.3 1254.3,544.6 1248.7,543.3 1246.8,545.2 1248.0,555.3 1250.6,561.0 1255.6,565.4" fill="none" stroke="#999" stroke-width="1.3"/>
</svg></div>
<!-- status bar -->
<div class="abs" style="left:0;top:1014px;width:1920px;height:18px;background:#f0f0f0"></div>
<div class="sb" style="left:0;width:99px;padding-left:5px">MapsID: 3810</div>
<div class="sb" style="left:102px;width:77px">png</div>
<div class="sb" style="left:182px;width:97px">MinZoom: 8</div>
<div class="sb" style="left:282px;width:97px">MaxZoom: 16</div>
<div class="sb" style="left:382px;width:97px">TileSize: 256</div>
<div class="sb" style="left:482px;width:97px;letter-spacing:0px">EPSG:3857</div>
<div class="sb" style="left:582px;width:1338px;padding-left:1px;letter-spacing:0.55px">Longitude=9.552612, Latitude=47.073863, tile=8/134/89.png</div>
</body></html>
